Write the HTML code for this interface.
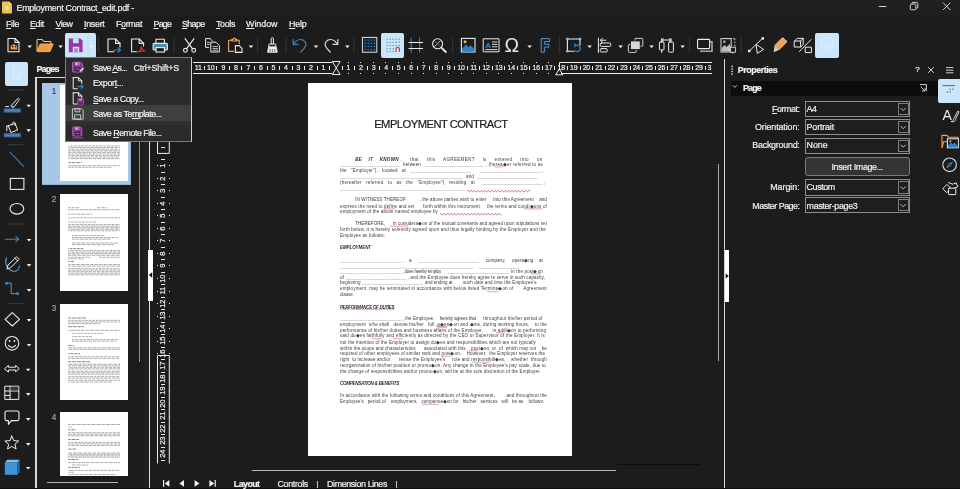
<!DOCTYPE html>
<html lang="en"><head><meta charset="utf-8"><title>Employment Contract_edit.pdf</title>
<style>
html,body{margin:0;padding:0;overflow:hidden;}
body{width:960px;height:489px;overflow:hidden;background:#1c1c1c;position:relative;font-family:"Liberation Sans",sans-serif;}
div{position:absolute;box-sizing:border-box;}
#w{left:0;top:0;width:960px;height:489px;will-change:transform;overflow:hidden;}
.t{position:absolute;white-space:pre;line-height:1;-webkit-text-stroke:0.2px;}
u{text-decoration:underline;text-decoration-thickness:0.7px;text-underline-offset:1px;}
svg{position:absolute;left:0;top:0;overflow:visible;}
.doc{position:absolute;white-space:pre;line-height:1;font-size:4.3px;color:#4a4a4a;text-align:justify;text-align-last:justify;}
.doc b{color:#222;}
</style></head><body><div id="w">
<div style="left:0px;top:0px;width:960px;height:14.5px;background:#202020;"></div>
<span id="t1" class="t" style="left:16.5px;top:3.68px;font-size:8.9px;color:#f0f0f0;letter-spacing:-0.244px;">Employment Contract_edit.pdf -</span>
<span id="t2" class="t" style="left:6px;top:19.58px;font-size:8.9px;color:#f0f0f0;letter-spacing:-0.328px;"><u>F</u>ile</span>
<span id="t3" class="t" style="left:30px;top:19.58px;font-size:8.9px;color:#f0f0f0;letter-spacing:-0.324px;"><u>E</u>dit</span>
<span id="t4" class="t" style="left:55.5px;top:19.58px;font-size:8.9px;color:#f0f0f0;letter-spacing:-0.523px;"><u>V</u>iew</span>
<span id="t5" class="t" style="left:84px;top:19.58px;font-size:8.9px;color:#f0f0f0;letter-spacing:-0.284px;"><u>I</u>nsert</span>
<span id="t6" class="t" style="left:116px;top:19.58px;font-size:8.9px;color:#f0f0f0;letter-spacing:-0.352px;">F<u>o</u>rmat</span>
<span id="t7" class="t" style="left:153.5px;top:19.58px;font-size:8.9px;color:#f0f0f0;letter-spacing:-0.809px;"><u>P</u>age</span>
<span id="t8" class="t" style="left:182px;top:19.58px;font-size:8.9px;color:#f0f0f0;letter-spacing:-0.634px;"><u>S</u>hape</span>
<span id="t9" class="t" style="left:216px;top:19.58px;font-size:8.9px;color:#f0f0f0;letter-spacing:-0.344px;"><u>T</u>ools</span>
<span id="t10" class="t" style="left:246px;top:19.58px;font-size:8.9px;color:#f0f0f0;letter-spacing:-0.016px;"><u>W</u>indow</span>
<span id="t11" class="t" style="left:289px;top:19.58px;font-size:8.9px;color:#f0f0f0;letter-spacing:-0.191px;"><u>H</u>elp</span>
<div style="left:65px;top:33px;width:31px;height:24.5px;background:#cbe6fb;border-radius:2px;"></div>
<div style="left:380.6px;top:33px;width:23.6px;height:24.5px;background:#cbe6fb;border-radius:2px;"></div>
<div style="left:815px;top:33px;width:23.5px;height:24.5px;background:#cbe6fb;border-radius:2px;"></div>
<div style="left:5.4px;top:62px;width:22.4px;height:23.8px;background:#cbe6fb;border-radius:2px;"></div>
<span id="t12" class="t" style="left:36.5px;top:64.58px;font-size:8.9px;color:#f0f0f0;font-weight:700;letter-spacing:-0.831px;">Pages</span>
<div style="left:35px;top:77.5px;width:1.6px;height:412px;background:#d8d8d8;"></div>
<div style="left:35px;top:76.9px;width:105px;height:1.6px;background:#d8d8d8;"></div>
<div style="left:42px;top:83px;width:89px;height:101.8px;background:#a6c8e6;border-right:1px solid #8db2d6;border-bottom:1px solid #8db2d6;"></div>
<div style="left:59.6px;top:85px;width:68.1px;height:95.8px;background:#ffffff;overflow:hidden;"></div>
<div style="left:59.6px;top:194.4px;width:68.1px;height:96.8px;background:#ffffff;overflow:hidden;"></div>
<div style="left:59.6px;top:303.5px;width:68.1px;height:96px;background:#ffffff;overflow:hidden;"></div>
<div style="left:59.6px;top:411.8px;width:68.1px;height:64.4px;background:#ffffff;overflow:hidden;"></div>
<span id="t13" class="t" style="left:51.8px;top:88.25px;font-size:8.2px;color:#3c4854;">1</span>
<span id="t14" class="t" style="left:51.8px;top:196.25px;font-size:8.2px;color:#a0a0a0;">2</span>
<span id="t15" class="t" style="left:51.8px;top:304.85px;font-size:8.2px;color:#a0a0a0;">3</span>
<span id="t16" class="t" style="left:51.8px;top:413.85px;font-size:8.2px;color:#a0a0a0;">4</span>
<div style="left:138.6px;top:60px;width:1px;height:302px;background:#8c8c8c;"></div>
<div style="left:47.3px;top:482.1px;width:71px;height:1.4px;background:#b4b4b4;"></div>
<div style="left:143px;top:77px;width:5.8px;height:410.6px;background:#202020;"></div>
<div style="left:149.2px;top:77px;width:1px;height:411px;background:#e0e0e0;"></div>
<div style="left:148.2px;top:249.8px;width:4.6px;height:51.4px;background:#ffffff;"></div>
<div style="left:308.3px;top:83px;width:264px;height:373.2px;background:#ffffff;"></div>
<div style="left:252px;top:470.2px;width:364px;height:1px;background:#b8b8b8;"></div>
<div style="left:617px;top:463.6px;width:84px;height:1px;background:#0c0c0c;"></div>
<div style="left:718px;top:164.3px;width:1.1px;height:197.2px;background:#a8a8a8;"></div>
<div style="left:724px;top:59px;width:1.1px;height:428.5px;background:#d4d4d4;"></div>
<div style="left:724.8px;top:250px;width:4.6px;height:51.5px;background:#ffffff;"></div>
<div style="left:0px;top:487.6px;width:960px;height:1.4px;background:#0e0e0e;"></div>
<span id="t17" class="t" style="left:233.8px;top:479.78px;font-size:8.9px;color:#f0f0f0;font-weight:700;letter-spacing:-0.566px;">Layout</span>
<span id="t18" class="t" style="left:277.5px;top:479.78px;font-size:8.9px;color:#f0f0f0;letter-spacing:-0.320px;">Controls</span>
<span id="t19" class="t" style="left:316.4px;top:480.81px;font-size:6.4px;color:#f0f0f0;">|</span>
<span id="t20" class="t" style="left:327px;top:479.78px;font-size:8.9px;color:#f0f0f0;letter-spacing:-0.374px;">Dimension Lines</span>
<span id="t21" class="t" style="left:395.4px;top:480.81px;font-size:6.4px;color:#f0f0f0;">|</span>
<span id="t22" class="t" style="left:737.8px;top:66.38px;font-size:8.9px;color:#f0f0f0;font-weight:700;letter-spacing:-0.451px;">Properties</span>
<span id="t23" class="t" style="left:915.2px;top:66.06px;font-size:8px;color:#f0f0f0;">?</span>
<div style="left:730.5px;top:80.6px;width:207px;height:15.7px;background:#0c0c0c;"></div>
<span id="t24" class="t" style="left:743px;top:83.88px;font-size:8.9px;color:#f0f0f0;font-weight:700;letter-spacing:-0.805px;">Page</span>
<div style="left:938px;top:79.3px;width:22px;height:24px;background:#cbe6fb;border-radius:2px 0 0 2px;"></div>
<span id="t25" class="t" style="left:772px;top:104.58px;font-size:8.9px;color:#f0f0f0;letter-spacing:-0.425px;"><u>F</u>ormat:</span>
<div style="left:804.6px;top:100.9px;width:105px;height:16.2px;background:#1e1e1e;border:1px solid #8e8e8e;"></div>
<div style="left:897.6px;top:102.9px;width:11px;height:12.2px;background:transparent;border:1px solid #808080;"></div>
<span id="t26" class="t" style="left:806.6px;top:104.58px;font-size:8.9px;color:#f0f0f0;letter-spacing:-0.480px;">A4</span>
<span id="t27" class="t" style="left:755px;top:122.98px;font-size:8.9px;color:#f0f0f0;letter-spacing:-0.108px;">Orientation:</span>
<div style="left:804.6px;top:119.1px;width:105px;height:16.2px;background:#1e1e1e;border:1px solid #8e8e8e;"></div>
<div style="left:897.6px;top:121.1px;width:11px;height:12.2px;background:transparent;border:1px solid #808080;"></div>
<span id="t28" class="t" style="left:806.6px;top:122.98px;font-size:8.9px;color:#f0f0f0;letter-spacing:-0.151px;">Portrait</span>
<span id="t29" class="t" style="left:752.3px;top:141.48px;font-size:8.9px;color:#f0f0f0;letter-spacing:-0.231px;">Background:</span>
<div style="left:804.6px;top:137.7px;width:105px;height:16.2px;background:#1e1e1e;border:1px solid #8e8e8e;"></div>
<div style="left:897.6px;top:139.7px;width:11px;height:12.2px;background:transparent;border:1px solid #808080;"></div>
<span id="t30" class="t" style="left:806.6px;top:141.48px;font-size:8.9px;color:#f0f0f0;letter-spacing:-0.080px;">None</span>
<span id="t31" class="t" style="left:770.2px;top:183.18px;font-size:8.9px;color:#f0f0f0;letter-spacing:-0.028px;">Margin:</span>
<div style="left:804.6px;top:179.4px;width:105px;height:16.2px;background:#1e1e1e;border:1px solid #8e8e8e;"></div>
<div style="left:897.6px;top:181.4px;width:11px;height:12.2px;background:transparent;border:1px solid #808080;"></div>
<span id="t32" class="t" style="left:806.6px;top:183.18px;font-size:8.9px;color:#f0f0f0;letter-spacing:-0.396px;">Custom</span>
<span id="t33" class="t" style="left:752.3px;top:201.68px;font-size:8.9px;color:#f0f0f0;letter-spacing:-0.458px;">Master Page:</span>
<div style="left:804.6px;top:197.2px;width:105px;height:16.2px;background:#1e1e1e;border:1px solid #8e8e8e;"></div>
<div style="left:897.6px;top:199.2px;width:11px;height:12.2px;background:transparent;border:1px solid #808080;"></div>
<span id="t34" class="t" style="left:806.6px;top:201.68px;font-size:8.9px;color:#f0f0f0;letter-spacing:-0.330px;">master-page3</span>
<div style="left:805.2px;top:157.3px;width:104.6px;height:18.9px;background:#343434;border:1px solid #7c7c7c;border-radius:3px;"></div>
<span id="t35" class="t" style="left:831.5px;top:162.78px;font-size:8.9px;color:#f0f0f0;letter-spacing:-0.349px;">Insert Image...</span>
<span id="t42" class="t" style="left:0px;top:64.29px;font-size:7.0px;color:#ededed;left:auto;width:20px;margin-left:188.18px;text-align:center;letter-spacing:-0.25px;">11</span>
<span id="t43" class="t" style="left:0px;top:64.29px;font-size:7.0px;color:#ededed;left:auto;width:20px;margin-left:200.70px;text-align:center;letter-spacing:-0.25px;">10</span>
<span id="t44" class="t" style="left:0px;top:64.29px;font-size:7.0px;color:#ededed;left:auto;width:20px;margin-left:213.22px;text-align:center;letter-spacing:-0.25px;">9</span>
<span id="t45" class="t" style="left:0px;top:64.29px;font-size:7.0px;color:#ededed;left:auto;width:20px;margin-left:225.74px;text-align:center;letter-spacing:-0.25px;">8</span>
<span id="t46" class="t" style="left:0px;top:64.29px;font-size:7.0px;color:#ededed;left:auto;width:20px;margin-left:238.26px;text-align:center;letter-spacing:-0.25px;">7</span>
<span id="t47" class="t" style="left:0px;top:64.29px;font-size:7.0px;color:#ededed;left:auto;width:20px;margin-left:250.78px;text-align:center;letter-spacing:-0.25px;">6</span>
<span id="t48" class="t" style="left:0px;top:64.29px;font-size:7.0px;color:#ededed;left:auto;width:20px;margin-left:263.30px;text-align:center;letter-spacing:-0.25px;">5</span>
<span id="t49" class="t" style="left:0px;top:64.29px;font-size:7.0px;color:#ededed;left:auto;width:20px;margin-left:275.82px;text-align:center;letter-spacing:-0.25px;">4</span>
<span id="t50" class="t" style="left:0px;top:64.29px;font-size:7.0px;color:#ededed;left:auto;width:20px;margin-left:288.34px;text-align:center;letter-spacing:-0.25px;">3</span>
<span id="t51" class="t" style="left:0px;top:64.29px;font-size:7.0px;color:#ededed;left:auto;width:20px;margin-left:300.86px;text-align:center;letter-spacing:-0.25px;">2</span>
<span id="t52" class="t" style="left:0px;top:64.29px;font-size:7.0px;color:#ededed;left:auto;width:20px;margin-left:313.38px;text-align:center;letter-spacing:-0.25px;">1</span>
<span id="t53" class="t" style="left:0px;top:64.29px;font-size:7.0px;color:#ededed;left:auto;width:20px;margin-left:338.42px;text-align:center;letter-spacing:-0.25px;">1</span>
<span id="t54" class="t" style="left:0px;top:64.29px;font-size:7.0px;color:#ededed;left:auto;width:20px;margin-left:350.94px;text-align:center;letter-spacing:-0.25px;">2</span>
<span id="t55" class="t" style="left:0px;top:64.29px;font-size:7.0px;color:#ededed;left:auto;width:20px;margin-left:363.46px;text-align:center;letter-spacing:-0.25px;">3</span>
<span id="t56" class="t" style="left:0px;top:64.29px;font-size:7.0px;color:#ededed;left:auto;width:20px;margin-left:375.98px;text-align:center;letter-spacing:-0.25px;">4</span>
<span id="t57" class="t" style="left:0px;top:64.29px;font-size:7.0px;color:#ededed;left:auto;width:20px;margin-left:388.50px;text-align:center;letter-spacing:-0.25px;">5</span>
<span id="t58" class="t" style="left:0px;top:64.29px;font-size:7.0px;color:#ededed;left:auto;width:20px;margin-left:401.02px;text-align:center;letter-spacing:-0.25px;">6</span>
<span id="t59" class="t" style="left:0px;top:64.29px;font-size:7.0px;color:#ededed;left:auto;width:20px;margin-left:413.54px;text-align:center;letter-spacing:-0.25px;">7</span>
<span id="t60" class="t" style="left:0px;top:64.29px;font-size:7.0px;color:#ededed;left:auto;width:20px;margin-left:426.06px;text-align:center;letter-spacing:-0.25px;">8</span>
<span id="t61" class="t" style="left:0px;top:64.29px;font-size:7.0px;color:#ededed;left:auto;width:20px;margin-left:438.58px;text-align:center;letter-spacing:-0.25px;">9</span>
<span id="t62" class="t" style="left:0px;top:64.29px;font-size:7.0px;color:#ededed;left:auto;width:20px;margin-left:451.10px;text-align:center;letter-spacing:-0.25px;">10</span>
<span id="t63" class="t" style="left:0px;top:64.29px;font-size:7.0px;color:#ededed;left:auto;width:20px;margin-left:463.62px;text-align:center;letter-spacing:-0.25px;">11</span>
<span id="t64" class="t" style="left:0px;top:64.29px;font-size:7.0px;color:#ededed;left:auto;width:20px;margin-left:476.14px;text-align:center;letter-spacing:-0.25px;">12</span>
<span id="t65" class="t" style="left:0px;top:64.29px;font-size:7.0px;color:#ededed;left:auto;width:20px;margin-left:488.66px;text-align:center;letter-spacing:-0.25px;">13</span>
<span id="t66" class="t" style="left:0px;top:64.29px;font-size:7.0px;color:#ededed;left:auto;width:20px;margin-left:501.18px;text-align:center;letter-spacing:-0.25px;">14</span>
<span id="t67" class="t" style="left:0px;top:64.29px;font-size:7.0px;color:#ededed;left:auto;width:20px;margin-left:513.70px;text-align:center;letter-spacing:-0.25px;">15</span>
<span id="t68" class="t" style="left:0px;top:64.29px;font-size:7.0px;color:#ededed;left:auto;width:20px;margin-left:526.22px;text-align:center;letter-spacing:-0.25px;">16</span>
<span id="t69" class="t" style="left:0px;top:64.29px;font-size:7.0px;color:#ededed;left:auto;width:20px;margin-left:538.74px;text-align:center;letter-spacing:-0.25px;">17</span>
<span id="t70" class="t" style="left:0px;top:64.29px;font-size:7.0px;color:#ededed;left:auto;width:20px;margin-left:551.26px;text-align:center;letter-spacing:-0.25px;">18</span>
<span id="t71" class="t" style="left:0px;top:64.29px;font-size:7.0px;color:#ededed;left:auto;width:20px;margin-left:563.78px;text-align:center;letter-spacing:-0.25px;">19</span>
<span id="t72" class="t" style="left:0px;top:64.29px;font-size:7.0px;color:#ededed;left:auto;width:20px;margin-left:576.30px;text-align:center;letter-spacing:-0.25px;">20</span>
<span id="t73" class="t" style="left:0px;top:64.29px;font-size:7.0px;color:#ededed;left:auto;width:20px;margin-left:588.82px;text-align:center;letter-spacing:-0.25px;">21</span>
<span id="t74" class="t" style="left:0px;top:64.29px;font-size:7.0px;color:#ededed;left:auto;width:20px;margin-left:601.34px;text-align:center;letter-spacing:-0.25px;">22</span>
<span id="t75" class="t" style="left:0px;top:64.29px;font-size:7.0px;color:#ededed;left:auto;width:20px;margin-left:613.86px;text-align:center;letter-spacing:-0.25px;">23</span>
<span id="t76" class="t" style="left:0px;top:64.29px;font-size:7.0px;color:#ededed;left:auto;width:20px;margin-left:626.38px;text-align:center;letter-spacing:-0.25px;">24</span>
<span id="t77" class="t" style="left:0px;top:64.29px;font-size:7.0px;color:#ededed;left:auto;width:20px;margin-left:638.90px;text-align:center;letter-spacing:-0.25px;">25</span>
<span id="t78" class="t" style="left:0px;top:64.29px;font-size:7.0px;color:#ededed;left:auto;width:20px;margin-left:651.42px;text-align:center;letter-spacing:-0.25px;">26</span>
<span id="t79" class="t" style="left:0px;top:64.29px;font-size:7.0px;color:#ededed;left:auto;width:20px;margin-left:663.94px;text-align:center;letter-spacing:-0.25px;">27</span>
<span id="t80" class="t" style="left:0px;top:64.29px;font-size:7.0px;color:#ededed;left:auto;width:20px;margin-left:676.46px;text-align:center;letter-spacing:-0.25px;">28</span>
<span id="t81" class="t" style="left:0px;top:64.29px;font-size:7.0px;color:#ededed;left:auto;width:20px;margin-left:688.98px;text-align:center;letter-spacing:-0.25px;">29</span>
<span id="t82" class="t" style="left:707.6px;top:64.29px;font-size:7.0px;color:#ededed;width:4px;overflow:hidden;">3</span>
<span id="t83" class="t" style="left:0px;top:-4.03px;font-size:7.6px;color:#ededed;left:153.00px;top:162.02px;width:20px;height:7.6px;text-align:center;transform:rotate(-90deg);letter-spacing:-0.25px;">1</span>
<span id="t84" class="t" style="left:0px;top:-4.03px;font-size:7.6px;color:#ededed;left:153.00px;top:174.54px;width:20px;height:7.6px;text-align:center;transform:rotate(-90deg);letter-spacing:-0.25px;">2</span>
<span id="t85" class="t" style="left:0px;top:-4.03px;font-size:7.6px;color:#ededed;left:153.00px;top:187.06px;width:20px;height:7.6px;text-align:center;transform:rotate(-90deg);letter-spacing:-0.25px;">3</span>
<span id="t86" class="t" style="left:0px;top:-4.03px;font-size:7.6px;color:#ededed;left:153.00px;top:199.58px;width:20px;height:7.6px;text-align:center;transform:rotate(-90deg);letter-spacing:-0.25px;">4</span>
<span id="t87" class="t" style="left:0px;top:-4.03px;font-size:7.6px;color:#ededed;left:153.00px;top:212.10px;width:20px;height:7.6px;text-align:center;transform:rotate(-90deg);letter-spacing:-0.25px;">5</span>
<span id="t88" class="t" style="left:0px;top:-4.03px;font-size:7.6px;color:#ededed;left:153.00px;top:224.62px;width:20px;height:7.6px;text-align:center;transform:rotate(-90deg);letter-spacing:-0.25px;">6</span>
<span id="t89" class="t" style="left:0px;top:-4.03px;font-size:7.6px;color:#ededed;left:153.00px;top:237.14px;width:20px;height:7.6px;text-align:center;transform:rotate(-90deg);letter-spacing:-0.25px;">7</span>
<span id="t90" class="t" style="left:0px;top:-4.03px;font-size:7.6px;color:#ededed;left:153.00px;top:249.66px;width:20px;height:7.6px;text-align:center;transform:rotate(-90deg);letter-spacing:-0.25px;">8</span>
<span id="t91" class="t" style="left:0px;top:-4.03px;font-size:7.6px;color:#ededed;left:153.00px;top:262.18px;width:20px;height:7.6px;text-align:center;transform:rotate(-90deg);letter-spacing:-0.25px;">9</span>
<span id="t92" class="t" style="left:0px;top:-4.03px;font-size:7.6px;color:#ededed;left:153.00px;top:274.70px;width:20px;height:7.6px;text-align:center;transform:rotate(-90deg);letter-spacing:-0.25px;">10</span>
<span id="t93" class="t" style="left:0px;top:-4.03px;font-size:7.6px;color:#ededed;left:153.00px;top:287.22px;width:20px;height:7.6px;text-align:center;transform:rotate(-90deg);letter-spacing:-0.25px;">11</span>
<span id="t94" class="t" style="left:0px;top:-4.03px;font-size:7.6px;color:#ededed;left:153.00px;top:299.74px;width:20px;height:7.6px;text-align:center;transform:rotate(-90deg);letter-spacing:-0.25px;">12</span>
<span id="t95" class="t" style="left:0px;top:-4.03px;font-size:7.6px;color:#ededed;left:153.00px;top:312.26px;width:20px;height:7.6px;text-align:center;transform:rotate(-90deg);letter-spacing:-0.25px;">13</span>
<span id="t96" class="t" style="left:0px;top:-4.03px;font-size:7.6px;color:#ededed;left:153.00px;top:324.78px;width:20px;height:7.6px;text-align:center;transform:rotate(-90deg);letter-spacing:-0.25px;">14</span>
<span id="t97" class="t" style="left:0px;top:-4.03px;font-size:7.6px;color:#ededed;left:153.00px;top:337.30px;width:20px;height:7.6px;text-align:center;transform:rotate(-90deg);letter-spacing:-0.25px;">15</span>
<span id="t98" class="t" style="left:0px;top:-4.03px;font-size:7.6px;color:#ededed;left:153.00px;top:349.82px;width:20px;height:7.6px;text-align:center;transform:rotate(-90deg);letter-spacing:-0.25px;">16</span>
<span id="t99" class="t" style="left:0px;top:-4.03px;font-size:7.6px;color:#ededed;left:153.00px;top:362.34px;width:20px;height:7.6px;text-align:center;transform:rotate(-90deg);letter-spacing:-0.25px;">17</span>
<span id="t100" class="t" style="left:0px;top:-4.03px;font-size:7.6px;color:#ededed;left:153.00px;top:374.86px;width:20px;height:7.6px;text-align:center;transform:rotate(-90deg);letter-spacing:-0.25px;">18</span>
<span id="t101" class="t" style="left:0px;top:-4.03px;font-size:7.6px;color:#ededed;left:153.00px;top:387.38px;width:20px;height:7.6px;text-align:center;transform:rotate(-90deg);letter-spacing:-0.25px;">19</span>
<span id="t102" class="t" style="left:0px;top:-4.03px;font-size:7.6px;color:#ededed;left:153.00px;top:399.90px;width:20px;height:7.6px;text-align:center;transform:rotate(-90deg);letter-spacing:-0.25px;">20</span>
<span id="t103" class="t" style="left:0px;top:-4.03px;font-size:7.6px;color:#ededed;left:153.00px;top:412.42px;width:20px;height:7.6px;text-align:center;transform:rotate(-90deg);letter-spacing:-0.25px;">21</span>
<span id="t104" class="t" style="left:0px;top:-4.03px;font-size:7.6px;color:#ededed;left:153.00px;top:424.94px;width:20px;height:7.6px;text-align:center;transform:rotate(-90deg);letter-spacing:-0.25px;">22</span>
<span id="t105" class="t" style="left:0px;top:-4.03px;font-size:7.6px;color:#ededed;left:153.00px;top:437.46px;width:20px;height:7.6px;text-align:center;transform:rotate(-90deg);letter-spacing:-0.25px;">23</span>
<span id="t106" class="t" style="left:0px;top:-4.03px;font-size:7.6px;color:#ededed;left:153.00px;top:449.98px;width:20px;height:7.6px;text-align:center;transform:rotate(-90deg);letter-spacing:-0.25px;">24</span>
<span id="t107" class="t" style="left:374.2px;top:118.61px;font-size:11.2px;color:#1a1a1a;letter-spacing:-0.526px;">EMPLOYMENT CONTRACT</span>
<span id="t108" class="t" style="left:355.2px;top:157.55px;font-size:4.5px;color:#3c3c3c;letter-spacing:0.349px;-webkit-text-stroke:0;"><b style="color:#2a2a2a"><i>BE    IT    KNOWN</i></b> ,     that     this     AGREEMENT     is     entered     into     on</span>
<span id="t109" class="t" style="left:340px;top:163.05px;font-size:4.5px;color:#a4a4a4;letter-spacing:-0.281px;-webkit-text-stroke:0;">___________________________</span>
<span id="t110" class="t" style="left:403px;top:163.05px;font-size:4.5px;color:#3c3c3c;letter-spacing:0.141px;-webkit-text-stroke:0;">between</span>
<span id="t111" class="t" style="left:423px;top:163.05px;font-size:4.5px;color:#a4a4a4;letter-spacing:-0.244px;-webkit-text-stroke:0;">___________________________</span>
<span id="t112" class="t" style="left:485.5px;top:163.05px;font-size:4.5px;color:#3c3c3c;letter-spacing:0.230px;-webkit-text-stroke:0;">, (herea◆er referred to as</span>
<span id="t113" class="t" style="left:340px;top:169.05px;font-size:4.5px;color:#3c3c3c;letter-spacing:0.160px;-webkit-text-stroke:0;">the   "Employer"),   located   at</span>
<span id="t114" class="t" style="left:410px;top:169.05px;font-size:4.5px;color:#a4a4a4;letter-spacing:-0.280px;-webkit-text-stroke:0;">__________________________</span>
<span id="t115" class="t" style="left:469px;top:169.05px;font-size:4.5px;color:#3c3c3c;-webkit-text-stroke:0;">,</span>
<span id="t116" class="t" style="left:479.7px;top:169.05px;font-size:4.5px;color:#a4a4a4;letter-spacing:-0.240px;-webkit-text-stroke:0;">___________________________</span>
<span id="t117" class="t" style="left:541.6px;top:169.05px;font-size:4.5px;color:#3c3c3c;-webkit-text-stroke:0;">,</span>
<span id="t118" class="t" style="left:340px;top:175.05px;font-size:4.5px;color:#a4a4a4;letter-spacing:-0.266px;-webkit-text-stroke:0;">_______________________________________________________</span>
<span id="t119" class="t" style="left:466px;top:175.05px;font-size:4.5px;color:#3c3c3c;letter-spacing:0.161px;-webkit-text-stroke:0;">and</span>
<span id="t120" class="t" style="left:477px;top:175.05px;font-size:4.5px;color:#a4a4a4;letter-spacing:-0.281px;-webkit-text-stroke:0;">___________________________</span>
<span id="t121" class="t" style="left:340px;top:180.55px;font-size:4.5px;color:#3c3c3c;letter-spacing:0.216px;-webkit-text-stroke:0;">(hereafter   referred   to   as   the   "Employee")   residing   at</span>
<span id="t122" class="t" style="left:482px;top:180.55px;font-size:4.5px;color:#a4a4a4;letter-spacing:-0.255px;-webkit-text-stroke:0;">___________________________</span>
<span id="t123" class="t" style="left:544px;top:180.55px;font-size:4.5px;color:#3c3c3c;-webkit-text-stroke:0;">,</span>
<span id="t124" class="t" style="left:340px;top:186.95px;font-size:4.5px;color:#a4a4a4;letter-spacing:-0.244px;-webkit-text-stroke:0;">___________________________</span>
<span id="t125" class="t" style="left:402.3px;top:186.95px;font-size:4.5px;color:#3c3c3c;-webkit-text-stroke:0;">,</span>
<span id="t126" class="t" style="left:404px;top:186.95px;font-size:4.5px;color:#a4a4a4;letter-spacing:-0.244px;-webkit-text-stroke:0;">___________________________</span>
<span id="t127" class="t" style="left:530px;top:186.95px;font-size:4.5px;color:#3c3c3c;-webkit-text-stroke:0;">.</span>
<span id="t128" class="t" style="left:355.2px;top:198.45px;font-size:4.5px;color:#3c3c3c;letter-spacing:0.101px;-webkit-text-stroke:0;">IN WITNESS THEREOF          , the above parties wish to enter     into this Agreement    and</span>
<span id="t129" class="t" style="left:340px;top:204.95px;font-size:4.5px;color:#3c3c3c;letter-spacing:0.163px;-webkit-text-stroke:0;">express the need to define and set      forth within this instrument     the terms and condi◆ons of</span>
<span id="t130" class="t" style="left:340px;top:210.25px;font-size:4.5px;color:#3c3c3c;letter-spacing:0.139px;-webkit-text-stroke:0;">employment of the above named employee by</span>
<span id="t131" class="t" style="left:355.2px;top:222.15px;font-size:4.5px;color:#3c3c3c;letter-spacing:0.076px;-webkit-text-stroke:0;">THEREFORE,      in considera◆on of the mutual covenants and agreed upon stipulations set</span>
<span id="t132" class="t" style="left:340px;top:228.45px;font-size:4.5px;color:#3c3c3c;letter-spacing:0.170px;-webkit-text-stroke:0;">forth below, it is hereby solemnly agreed upon and thus legally binding by the Employer and the</span>
<span id="t133" class="t" style="left:340px;top:234.15px;font-size:4.5px;color:#3c3c3c;letter-spacing:0.136px;-webkit-text-stroke:0;">Employee as follows:</span>
<span id="t134" class="t" style="left:340px;top:246.15px;font-size:4.5px;color:#3c3c3c;letter-spacing:-0.077px;-webkit-text-stroke:0;"><b style="color:#2a2a2a"><i>EMPLOYMENT</i></b></span>
<span id="t135" class="t" style="left:340px;top:258.75px;font-size:4.5px;color:#a4a4a4;letter-spacing:-0.229px;-webkit-text-stroke:0;">___________________________</span>
<span id="t136" class="t" style="left:402.5px;top:258.75px;font-size:4.5px;color:#3c3c3c;-webkit-text-stroke:0;">,</span>
<span id="t137" class="t" style="left:409px;top:258.75px;font-size:4.5px;color:#3c3c3c;letter-spacing:-0.516px;-webkit-text-stroke:0;">a</span>
<span id="t138" class="t" style="left:418.6px;top:258.75px;font-size:4.5px;color:#a4a4a4;letter-spacing:-0.266px;-webkit-text-stroke:0;">___________________________</span>
<span id="t139" class="t" style="left:485.7px;top:258.75px;font-size:4.5px;color:#3c3c3c;letter-spacing:0.077px;-webkit-text-stroke:0;">company,</span>
<span id="t140" class="t" style="left:512px;top:258.75px;font-size:4.5px;color:#3c3c3c;letter-spacing:0.123px;-webkit-text-stroke:0;">opera◆ng</span>
<span id="t141" class="t" style="left:539px;top:258.75px;font-size:4.5px;color:#3c3c3c;letter-spacing:0.117px;-webkit-text-stroke:0;">at</span>
<span id="t142" class="t" style="left:340px;top:264.95px;font-size:4.5px;color:#a4a4a4;letter-spacing:-0.229px;-webkit-text-stroke:0;">___________________________</span>
<span id="t143" class="t" style="left:402.5px;top:264.95px;font-size:4.5px;color:#3c3c3c;-webkit-text-stroke:0;">,</span>
<span id="t144" class="t" style="left:404px;top:264.95px;font-size:4.5px;color:#a4a4a4;letter-spacing:-0.256px;-webkit-text-stroke:0;">______________________________</span>
<span id="t145" class="t" style="left:472.5px;top:264.95px;font-size:4.5px;color:#3c3c3c;-webkit-text-stroke:0;">,</span>
<span id="t146" class="t" style="left:478.5px;top:264.95px;font-size:4.5px;color:#a4a4a4;letter-spacing:-0.238px;-webkit-text-stroke:0;">_________________</span>
<span id="t147" class="t" style="left:518px;top:264.95px;font-size:4.5px;color:#3c3c3c;-webkit-text-stroke:0;">,</span>
<span id="t148" class="t" style="left:340px;top:269.75px;font-size:4.5px;color:#a4a4a4;letter-spacing:-0.229px;-webkit-text-stroke:0;">___________________________</span>
<span id="t149" class="t" style="left:402.5px;top:269.75px;font-size:4.5px;color:#3c3c3c;letter-spacing:-0.227px;-webkit-text-stroke:0;">, does hereby employ</span>
<span id="t150" class="t" style="left:447px;top:269.75px;font-size:4.5px;color:#a4a4a4;letter-spacing:-0.225px;-webkit-text-stroke:0;">___________________________</span>
<span id="t151" class="t" style="left:511px;top:269.75px;font-size:4.5px;color:#3c3c3c;letter-spacing:0.176px;-webkit-text-stroke:0;">in the posi◆on</span>
<span id="t152" class="t" style="left:340px;top:275.75px;font-size:4.5px;color:#3c3c3c;letter-spacing:0.367px;-webkit-text-stroke:0;">of</span>
<span id="t153" class="t" style="left:346px;top:275.75px;font-size:4.5px;color:#a4a4a4;letter-spacing:-0.281px;-webkit-text-stroke:0;">___________________________</span>
<span id="t154" class="t" style="left:407.5px;top:275.75px;font-size:4.5px;color:#3c3c3c;letter-spacing:0.135px;-webkit-text-stroke:0;">, and the Employee does hereby agree to serve in such capacity,</span>
<span id="t155" class="t" style="left:340px;top:281.45px;font-size:4.5px;color:#3c3c3c;letter-spacing:0.108px;-webkit-text-stroke:0;">beginning</span>
<span id="t156" class="t" style="left:362px;top:281.45px;font-size:4.5px;color:#a4a4a4;letter-spacing:-0.244px;-webkit-text-stroke:0;">___________________________</span>
<span id="t157" class="t" style="left:425px;top:281.45px;font-size:4.5px;color:#3c3c3c;letter-spacing:0.017px;-webkit-text-stroke:0;">and ending at</span>
<span id="t158" class="t" style="left:463px;top:281.45px;font-size:4.5px;color:#3c3c3c;letter-spacing:0.109px;-webkit-text-stroke:0;">such date and time the Employee's</span>
<span id="t159" class="t" style="left:340px;top:287.45px;font-size:4.5px;color:#3c3c3c;letter-spacing:0.195px;-webkit-text-stroke:0;">employment  may be terminated in accordance with below listed Termina◆on of       Agreement</span>
<span id="t160" class="t" style="left:340px;top:293.45px;font-size:4.5px;color:#3c3c3c;letter-spacing:-0.038px;-webkit-text-stroke:0;">clause.</span>
<span id="t161" class="t" style="left:340px;top:305.65px;font-size:4.5px;color:#3c3c3c;letter-spacing:-0.301px;-webkit-text-stroke:0;"><b style="color:#2a2a2a"><i>PERFORMANCE OF DUTIES</i></b></span>
<span id="t162" class="t" style="left:340px;top:316.95px;font-size:4.5px;color:#a4a4a4;letter-spacing:-0.221px;-webkit-text-stroke:0;">___________________________</span>
<span id="t163" class="t" style="left:402.6px;top:316.95px;font-size:4.5px;color:#3c3c3c;letter-spacing:0.055px;-webkit-text-stroke:0;">, the Employee,</span>
<span id="t164" class="t" style="left:439.7px;top:316.95px;font-size:4.5px;color:#3c3c3c;letter-spacing:-0.068px;-webkit-text-stroke:0;">hereby agrees that</span>
<span id="t165" class="t" style="left:483.3px;top:316.95px;font-size:4.5px;color:#3c3c3c;letter-spacing:0.155px;-webkit-text-stroke:0;">throughout his/her period of</span>
<span id="t166" class="t" style="left:340px;top:322.95px;font-size:4.5px;color:#3c3c3c;letter-spacing:0.150px;-webkit-text-stroke:0;">employment  s/he shall   devote his/her   full  a◆en◆on and ◆me, during working hours,    to the</span>
<span id="t167" class="t" style="left:340px;top:328.95px;font-size:4.5px;color:#3c3c3c;letter-spacing:0.143px;-webkit-text-stroke:0;">performance of his/her duties and business affairs of the Employer,       in addi◆on to performing</span>
<span id="t168" class="t" style="left:340px;top:334.45px;font-size:4.5px;color:#3c3c3c;letter-spacing:0.180px;-webkit-text-stroke:0;">said du◆es faithfully and efficiently as directed by the CEO or Supervisor of the Employer. It is</span>
<span id="t169" class="t" style="left:340px;top:340.85px;font-size:4.5px;color:#3c3c3c;letter-spacing:0.129px;-webkit-text-stroke:0;">not the intention of the Employer to assign du◆es and responsibilities which are not typically</span>
<span id="t170" class="t" style="left:340px;top:346.55px;font-size:4.5px;color:#3c3c3c;letter-spacing:0.129px;-webkit-text-stroke:0;">within the scope and characteristics      associated with this    posi◆on, or  of  which may not    be</span>
<span id="t171" class="t" style="left:340px;top:352.35px;font-size:4.5px;color:#3c3c3c;letter-spacing:0.131px;-webkit-text-stroke:0;">required of other employees of similar rank and posi◆on.    However,  the Employer reserves the</span>
<span id="t172" class="t" style="left:340px;top:358.25px;font-size:4.5px;color:#3c3c3c;letter-spacing:0.130px;-webkit-text-stroke:0;">right  to increase and/or      revise the Employee's     role and responsibili◆es,    whether  through</span>
<span id="t173" class="t" style="left:340px;top:364.25px;font-size:4.5px;color:#3c3c3c;letter-spacing:0.157px;-webkit-text-stroke:0;">reorganization of his/her position or promo◆on. Any change in the Employee's pay scale, due to</span>
<span id="t174" class="t" style="left:340px;top:370.05px;font-size:4.5px;color:#3c3c3c;letter-spacing:0.154px;-webkit-text-stroke:0;">the change of responsibilities and/or promo◆on, will be at the sole discretion of the Employer.</span>
<span id="t175" class="t" style="left:340px;top:382.25px;font-size:4.5px;color:#3c3c3c;letter-spacing:-0.236px;-webkit-text-stroke:0;"><b style="color:#2a2a2a"><i>COMPENSATION &amp; BENEFITS</i></b></span>
<span id="t176" class="t" style="left:340px;top:394.25px;font-size:4.5px;color:#3c3c3c;letter-spacing:0.154px;-webkit-text-stroke:0;">In accordance with the following terms and conditions of this Agreement,        and throughout the</span>
<span id="t177" class="t" style="left:340px;top:400.25px;font-size:4.5px;color:#3c3c3c;letter-spacing:0.064px;-webkit-text-stroke:0;">Employee's   period of    employment,   compensa◆on for   his/her   services   will   be as    follows:</span>
<svg width="960" height="489" viewBox="0 0 960 489">
<g><path d="M3 1.5 h6 l3 3 v8 a1 1 0 0 1 -1 1 h-8 a1 1 0 0 1 -1 -1 v-10 a1 1 0 0 1 1 -1z" fill="#e8c55a"/><path d="M9 1.5 l3 3 h-3z" fill="#f7e6a8"/><circle cx="7" cy="8" r="2" fill="#f3dc8c"/></g>
<g stroke="#e6e6e6" stroke-width="0.9" fill="none"><path d="M878.8 6.5 h7.4"/><rect x="910.3" y="4" width="5.6" height="5.8" rx="1.2"/><path d="M912 4 v-0.6 a1 1 0 0 1 1 -1 h3.6 a1.2 1.2 0 0 1 1.2 1.2 v3.6 a1 1 0 0 1 -1 1 h-0.8"/><path d="M943 2.6 l7.4 7.4 M950.4 2.6 l-7.4 7.4"/></g>
<path d="M152.2 272.3 v5.4 l-3.4 -2.7z" fill="#111"/>
<path d="M725.6 273.4 v5.2 l3.2 -2.6z" fill="#111"/>
<g fill="#f0f0f0"><rect x="163" y="480" width="1.2" height="6.8"/><path d="M169.4 480 v6.8 l-4.6 -3.4z"/><path d="M184 480 v6.8 l-4.6 -3.4z"/><path d="M194.6 480 v6.8 l4.8 -3.4z"/><path d="M209.4 480 v6.8 l4.8 -3.4z"/><rect x="214.6" y="480" width="1.2" height="6.8"/></g>
<g fill="#e8e8e8"><rect x="731.4" y="65.6" width="1.4" height="1.4"/><rect x="731.4" y="68.2" width="1.4" height="1.4"/><rect x="731.4" y="70.8" width="1.4" height="1.4"/><rect x="731.4" y="73.4" width="1.4" height="1.4"/></g>
<path d="M928.2 67.2 l5.6 5.6 M933.8 67.2 l-5.6 5.6" stroke="#e8e8e8" stroke-width="0.9"/>
<path d="M946 67.6 h7.4 M946 70.2 h7.4 M946 72.8 h7.4" stroke="#e8e8e8" stroke-width="0.9"/>
<path d="M732.6 85.2 l2.2 2.2 l2.2 -2.2" stroke="#d0d0d0" stroke-width="0.9" fill="none"/>
<g stroke="#e4e4e4" stroke-width="0.9" fill="none"><path d="M920 84.6 h6.4 v6.4"/><path d="M920.6 86.6 l4 4 M925 88 v3 h-3"/></g>
<path d="M900.6 107.9 l2.6 2.6 l2.6 -2.6" stroke="#d0d0d0" stroke-width="0.9" fill="none"/>
<path d="M900.6 126.1 l2.6 2.6 l2.6 -2.6" stroke="#d0d0d0" stroke-width="0.9" fill="none"/>
<path d="M900.6 144.7 l2.6 2.6 l2.6 -2.6" stroke="#d0d0d0" stroke-width="0.9" fill="none"/>
<path d="M900.6 186.4 l2.6 2.6 l2.6 -2.6" stroke="#d0d0d0" stroke-width="0.9" fill="none"/>
<path d="M900.6 204.2 l2.6 2.6 l2.6 -2.6" stroke="#d0d0d0" stroke-width="0.9" fill="none"/>
<g stroke="#ededed" stroke-width="1" fill="none"><path d="M193 62.5 H332.5 M193 73.5 H332.5"/><path d="M559.5 62.5 H712 M559.5 73.5 H712 M559.5 62.5 V73.5"/><path d="M332.3 61.5 h7.8 l-7.8 13 h7.8 z" stroke-linejoin="round"/><path d="M555.6 74.8 l3.7 -5.6 l3.7 5.6z" fill="#1c1c1c"/></g>
<g fill="#ededed" shape-rendering="crispEdges"><rect x="198" y="62" width="1" height="1"/><rect x="198" y="73" width="1" height="1"/><rect x="204" y="66" width="1" height="4"/><rect x="210" y="62" width="1" height="1"/><rect x="210" y="73" width="1" height="1"/><rect x="216" y="66" width="1" height="4"/><rect x="223" y="62" width="1" height="1"/><rect x="223" y="73" width="1" height="1"/><rect x="229" y="66" width="1" height="4"/><rect x="235" y="62" width="1" height="1"/><rect x="235" y="73" width="1" height="1"/><rect x="241" y="66" width="1" height="4"/><rect x="248" y="62" width="1" height="1"/><rect x="248" y="73" width="1" height="1"/><rect x="254" y="66" width="1" height="4"/><rect x="260" y="62" width="1" height="1"/><rect x="260" y="73" width="1" height="1"/><rect x="267" y="66" width="1" height="4"/><rect x="273" y="62" width="1" height="1"/><rect x="273" y="73" width="1" height="1"/><rect x="279" y="66" width="1" height="4"/><rect x="285" y="62" width="1" height="1"/><rect x="285" y="73" width="1" height="1"/><rect x="292" y="66" width="1" height="4"/><rect x="298" y="62" width="1" height="1"/><rect x="298" y="73" width="1" height="1"/><rect x="304" y="66" width="1" height="4"/><rect x="310" y="62" width="1" height="1"/><rect x="310" y="73" width="1" height="1"/><rect x="317" y="66" width="1" height="4"/><rect x="323" y="62" width="1" height="1"/><rect x="323" y="73" width="1" height="1"/><rect x="329" y="66" width="1" height="4"/><rect x="342" y="66" width="1" height="4"/><rect x="348" y="62" width="1" height="1"/><rect x="348" y="73" width="1" height="1"/><rect x="354" y="66" width="1" height="4"/><rect x="360" y="62" width="1" height="1"/><rect x="360" y="73" width="1" height="1"/><rect x="367" y="66" width="1" height="4"/><rect x="373" y="62" width="1" height="1"/><rect x="373" y="73" width="1" height="1"/><rect x="379" y="66" width="1" height="4"/><rect x="385" y="62" width="1" height="1"/><rect x="385" y="73" width="1" height="1"/><rect x="392" y="66" width="1" height="4"/><rect x="398" y="62" width="1" height="1"/><rect x="398" y="73" width="1" height="1"/><rect x="404" y="66" width="1" height="4"/><rect x="411" y="62" width="1" height="1"/><rect x="411" y="73" width="1" height="1"/><rect x="417" y="66" width="1" height="4"/><rect x="423" y="62" width="1" height="1"/><rect x="423" y="73" width="1" height="1"/><rect x="429" y="66" width="1" height="4"/><rect x="436" y="62" width="1" height="1"/><rect x="436" y="73" width="1" height="1"/><rect x="442" y="66" width="1" height="4"/><rect x="448" y="62" width="1" height="1"/><rect x="448" y="73" width="1" height="1"/><rect x="454" y="66" width="1" height="4"/><rect x="461" y="62" width="1" height="1"/><rect x="461" y="73" width="1" height="1"/><rect x="467" y="66" width="1" height="4"/><rect x="473" y="62" width="1" height="1"/><rect x="473" y="73" width="1" height="1"/><rect x="479" y="66" width="1" height="4"/><rect x="486" y="62" width="1" height="1"/><rect x="486" y="73" width="1" height="1"/><rect x="492" y="66" width="1" height="4"/><rect x="498" y="62" width="1" height="1"/><rect x="498" y="73" width="1" height="1"/><rect x="504" y="66" width="1" height="4"/><rect x="511" y="62" width="1" height="1"/><rect x="511" y="73" width="1" height="1"/><rect x="517" y="66" width="1" height="4"/><rect x="523" y="62" width="1" height="1"/><rect x="523" y="73" width="1" height="1"/><rect x="529" y="66" width="1" height="4"/><rect x="536" y="62" width="1" height="1"/><rect x="536" y="73" width="1" height="1"/><rect x="542" y="66" width="1" height="4"/><rect x="548" y="62" width="1" height="1"/><rect x="548" y="73" width="1" height="1"/><rect x="554" y="66" width="1" height="4"/><rect x="561" y="62" width="1" height="1"/><rect x="561" y="73" width="1" height="1"/><rect x="567" y="66" width="1" height="4"/><rect x="573" y="62" width="1" height="1"/><rect x="573" y="73" width="1" height="1"/><rect x="580" y="66" width="1" height="4"/><rect x="586" y="62" width="1" height="1"/><rect x="586" y="73" width="1" height="1"/><rect x="592" y="66" width="1" height="4"/><rect x="598" y="62" width="1" height="1"/><rect x="598" y="73" width="1" height="1"/><rect x="605" y="66" width="1" height="4"/><rect x="611" y="62" width="1" height="1"/><rect x="611" y="73" width="1" height="1"/><rect x="617" y="66" width="1" height="4"/><rect x="623" y="62" width="1" height="1"/><rect x="623" y="73" width="1" height="1"/><rect x="630" y="66" width="1" height="4"/><rect x="636" y="62" width="1" height="1"/><rect x="636" y="73" width="1" height="1"/><rect x="642" y="66" width="1" height="4"/><rect x="648" y="62" width="1" height="1"/><rect x="648" y="73" width="1" height="1"/><rect x="655" y="66" width="1" height="4"/><rect x="661" y="62" width="1" height="1"/><rect x="661" y="73" width="1" height="1"/><rect x="667" y="66" width="1" height="4"/><rect x="673" y="62" width="1" height="1"/><rect x="673" y="73" width="1" height="1"/><rect x="680" y="66" width="1" height="4"/><rect x="686" y="62" width="1" height="1"/><rect x="686" y="73" width="1" height="1"/><rect x="692" y="66" width="1" height="4"/><rect x="698" y="62" width="1" height="1"/><rect x="698" y="73" width="1" height="1"/><rect x="705" y="66" width="1" height="4"/><rect x="711" y="62" width="1" height="1"/><rect x="711" y="73" width="1" height="1"/></g>
<g stroke="#ededed" stroke-width="1" fill="none"><path d="M157.5 142 V153.4 H169.3 V142"/><path d="M157.5 463.5 V355.5 H169.3 V463.5"/></g>
<g fill="#ededed" shape-rendering="crispEdges"><rect x="161" y="159" width="4" height="1"/><rect x="157" y="165" width="1" height="1"/><rect x="169" y="165" width="1" height="1"/><rect x="161" y="172" width="4" height="1"/><rect x="157" y="178" width="1" height="1"/><rect x="169" y="178" width="1" height="1"/><rect x="161" y="184" width="4" height="1"/><rect x="157" y="190" width="1" height="1"/><rect x="169" y="190" width="1" height="1"/><rect x="161" y="197" width="4" height="1"/><rect x="157" y="203" width="1" height="1"/><rect x="169" y="203" width="1" height="1"/><rect x="161" y="209" width="4" height="1"/><rect x="157" y="215" width="1" height="1"/><rect x="169" y="215" width="1" height="1"/><rect x="161" y="222" width="4" height="1"/><rect x="157" y="228" width="1" height="1"/><rect x="169" y="228" width="1" height="1"/><rect x="161" y="234" width="4" height="1"/><rect x="157" y="240" width="1" height="1"/><rect x="169" y="240" width="1" height="1"/><rect x="161" y="247" width="4" height="1"/><rect x="157" y="253" width="1" height="1"/><rect x="169" y="253" width="1" height="1"/><rect x="161" y="259" width="4" height="1"/><rect x="157" y="265" width="1" height="1"/><rect x="169" y="265" width="1" height="1"/><rect x="161" y="272" width="4" height="1"/><rect x="157" y="278" width="1" height="1"/><rect x="169" y="278" width="1" height="1"/><rect x="161" y="284" width="4" height="1"/><rect x="157" y="291" width="1" height="1"/><rect x="169" y="291" width="1" height="1"/><rect x="161" y="297" width="4" height="1"/><rect x="157" y="303" width="1" height="1"/><rect x="169" y="303" width="1" height="1"/><rect x="161" y="309" width="4" height="1"/><rect x="157" y="316" width="1" height="1"/><rect x="169" y="316" width="1" height="1"/><rect x="161" y="322" width="4" height="1"/><rect x="157" y="328" width="1" height="1"/><rect x="169" y="328" width="1" height="1"/><rect x="161" y="334" width="4" height="1"/><rect x="157" y="341" width="1" height="1"/><rect x="169" y="341" width="1" height="1"/><rect x="161" y="347" width="4" height="1"/><rect x="157" y="353" width="1" height="1"/><rect x="169" y="353" width="1" height="1"/><rect x="161" y="359" width="4" height="1"/><rect x="157" y="366" width="1" height="1"/><rect x="169" y="366" width="1" height="1"/><rect x="161" y="372" width="4" height="1"/><rect x="157" y="378" width="1" height="1"/><rect x="169" y="378" width="1" height="1"/><rect x="161" y="384" width="4" height="1"/><rect x="157" y="391" width="1" height="1"/><rect x="169" y="391" width="1" height="1"/><rect x="161" y="397" width="4" height="1"/><rect x="157" y="403" width="1" height="1"/><rect x="169" y="403" width="1" height="1"/><rect x="161" y="409" width="4" height="1"/><rect x="157" y="416" width="1" height="1"/><rect x="169" y="416" width="1" height="1"/><rect x="161" y="422" width="4" height="1"/><rect x="157" y="428" width="1" height="1"/><rect x="169" y="428" width="1" height="1"/><rect x="161" y="434" width="4" height="1"/><rect x="157" y="441" width="1" height="1"/><rect x="169" y="441" width="1" height="1"/><rect x="161" y="447" width="4" height="1"/><rect x="157" y="453" width="1" height="1"/><rect x="169" y="453" width="1" height="1"/><rect x="161" y="460" width="4" height="1"/><rect x="161" y="147" width="4" height="1"/></g>
<g stroke="#ececec" stroke-width="1.1" fill="none" stroke-linejoin="round" stroke-linecap="round" ><path d="M8 38.5 h7 l4 4 v9.3 h-11z"/><path d="M15 38.5 v4 h4" /></g>
<path d="M10.6 49.6 v-3.2 c0-1 1-1.6 1.8-1 c0.4-1.4 2.6-1.4 3 0 c1-0.4 1.8 0.2 1.8 1 v3.2z" fill="#f09a4a"/><circle cx="12.6" cy="46.6" r="0.9" fill="#3a2a1a"/><circle cx="15.6" cy="46.6" r="0.9" fill="#3a2a1a"/>
<path d="M27.40 45.50 h4.6 l-2.3 2.6z" fill="#f2f2f2"/>
<path d="M37 51 V40.4 a0.9 0.9 0 0 1 0.9-0.9 h4.2 l1.6 2 h6.3 a0.9 0.9 0 0 1 0.9 0.9 v2" fill="none" stroke="#f6c27e" stroke-width="1.1" stroke-linejoin="round"/><path d="M37 51.6 l3.2-7.6 h13 l-3.2 7.6z" fill="#f09a3e" stroke="#f6b871" stroke-width="0.9" stroke-linejoin="round"/>
<path d="M58.30 45.50 h4.6 l-2.3 2.6z" fill="#f2f2f2"/>
<path d="M68.8 38.4 h11.4 l2.4 2.4 v11.4 h-13.8z" fill="#96389c"/><rect x="73" y="38.4" width="5.6" height="4.8" fill="#cbe6fb"/><rect x="72.8" y="46.8" width="6.4" height="5.4" fill="#cbe6fb"/><rect x="74.2" y="48.2" width="3.6" height="4" fill="#b77fbf"/>
<rect x="87.6" y="35" width="0.8" height="20.5" fill="#b8d6ee"/>
<path d="M89.30 45.50 h4.6 l-2.3 2.6z" fill="#eef7ff"/>
<rect x="98.10" y="37" width="1" height="16" fill="#363636"/>
<g stroke="#ececec" stroke-width="1.1" fill="none" stroke-linejoin="round" stroke-linecap="round" ><path d="M108 39 h7.6 l4.4 4.4 v3.6 M108 39 v12.8 h6"/><path d="M115.6 39 v4.4 h4.4"/></g>
<g stroke="#2f86c4" stroke-width="1.2" fill="none" stroke-linejoin="round" stroke-linecap="round" ><path d="M113.6 50 h6.6 M118 47.8 l2.4 2.2 l-2.4 2.2"/></g>
<g stroke="#ececec" stroke-width="1.1" fill="none" stroke-linejoin="round" stroke-linecap="round" ><path d="M131.6 39 h7.6 l4.4 4.4 v2.6 M131.6 39 v12.8 h5"/><path d="M139.2 39 v4.4 h4.4"/></g>
<g stroke="#d23b3b" stroke-width="1.1" fill="none" stroke-linejoin="round" stroke-linecap="round" ><path d="M138 52 c2-1 3.4-3.6 3.2-5.4 c1 2.6 2.6 4.4 4 4.6 c-2-0.4-5 0-7.2 0.8z"/></g>
<g stroke="#ececec" stroke-width="1.1" fill="none" stroke-linejoin="round" stroke-linecap="round" ><rect x="156" y="39.3" width="8.4" height="4.2"/></g>
<rect x="153.1" y="43.4" width="14.3" height="6.6" rx="1" fill="#4f8fae" stroke="#ececec" stroke-width="1.1"/><rect x="156" y="47.6" width="8.4" height="4.4" fill="#1c1c1c" stroke="#ececec" stroke-width="1.1"/>
<rect x="173.50" y="37" width="1" height="16" fill="#363636"/>
<g stroke="#ececec" stroke-width="1.1" fill="none" stroke-linejoin="round" stroke-linecap="round" ><path d="M185 38.6 l7.4 10 M194 38.6 l-7.4 10"/><circle cx="185.4" cy="50.3" r="1.9"/><circle cx="193.7" cy="50.3" r="1.9"/></g>
<g stroke="#ececec" stroke-width="1.0" fill="none" stroke-linejoin="round" stroke-linecap="round" ><path d="M210 38.6 h-4.4 v8.8 h3 M210 38.6 l2.6 2.6"/><path d="M211.2 42.2 h4.8 l3.4 3.4 v6.4 h-8.2z"/><path d="M213 46.6 h4.6 M213 48.6 h4.6 M213 50.3 h4.6 M207.3 42.4 h2.2 M207.3 44.4 h2.2" stroke-width="0.8"/></g>
<g stroke="#f2a55c" stroke-width="1.1" fill="none" stroke-linejoin="round" stroke-linecap="round" ><path d="M232 40.2 h-3.4 v11.2 h5 M236.2 40.2 h3 v3.6"/><path d="M231.8 41 v-1.6 h1.4 c0-1.8 2.2-1.8 2.2 0 h1.4 v1.6z"/></g>
<g stroke="#ececec" stroke-width="1.1" fill="none" stroke-linejoin="round" stroke-linecap="round" ><path d="M235.4 45.6 h3.8 l2.8 2.8 v4 h-6.6z" fill="#1c1c1c"/></g>
<path d="M248.70 45.50 h4.6 l-2.3 2.6z" fill="#f2f2f2"/>
<rect x="257.10" y="37" width="1" height="16" fill="#363636"/>
<g stroke="#ececec" stroke-width="1.0" fill="none" stroke-linejoin="round" stroke-linecap="round" ><path d="M271.2 44 v-5.2 a1.1 1.1 0 0 1 2.2 0 v5.2"/><path d="M268.8 47 v-2.2 a0.8 0.8 0 0 1 0.8-0.8 h5.4 a0.8 0.8 0 0 1 0.8 0.8 v2.2z"/><path d="M268.6 47.2 l-1 5 h9.6 l-1-5z" fill="#ececec"/></g>
<path d="M270 49 v3 M272.4 49 v3 M274.8 49 v3" stroke="#1c1c1c" stroke-width="0.6"/>
<rect x="285.50" y="37" width="1" height="16" fill="#363636"/>
<g stroke="#3d85bd" stroke-width="1.25" fill="none" stroke-linejoin="round" stroke-linecap="round" ><path d="M293.2 39.6 v4.8 h4.8"/><path d="M293.6 44 c2.6-3.8 6.6-5.6 10-3.6 c3.4 2.2 2.6 5.6 0.6 8 l-3.4 3.6"/></g>
<path d="M313.70 45.50 h4.6 l-2.3 2.6z" fill="#f2f2f2"/>
<g stroke="#d8d8d8" stroke-width="1.25" fill="none" stroke-linejoin="round" stroke-linecap="round" ><path d="M337.8 39.6 v4.8 h-4.8"/><path d="M337.4 44 c-2.6-3.8-6.6-5.6-10-3.6 c-3.4 2.2-2.6 5.6-0.6 8 l3.4 3.6"/></g>
<path d="M345.10 45.50 h4.6 l-2.3 2.6z" fill="#f2f2f2"/>
<rect x="353.30" y="37" width="1" height="16" fill="#363636"/>
<rect x="362.4" y="37.4" width="14.4" height="14.8" fill="#10263a" stroke="#e0e0e0" stroke-width="1"/>
<g fill="#6fa8d6"><rect x="364.6" y="39.6" width="1" height="1"/><rect x="364.6" y="42.8" width="1" height="1"/><rect x="364.6" y="46" width="1" height="1"/><rect x="364.6" y="49.2" width="1" height="1"/><rect x="367.7" y="39.6" width="1" height="1"/><rect x="367.7" y="42.8" width="1" height="1"/><rect x="367.7" y="46" width="1" height="1"/><rect x="367.7" y="49.2" width="1" height="1"/><rect x="370.8" y="39.6" width="1" height="1"/><rect x="370.8" y="42.8" width="1" height="1"/><rect x="370.8" y="46" width="1" height="1"/><rect x="370.8" y="49.2" width="1" height="1"/><rect x="373.9" y="39.6" width="1" height="1"/><rect x="373.9" y="42.8" width="1" height="1"/><rect x="373.9" y="46" width="1" height="1"/><rect x="373.9" y="49.2" width="1" height="1"/></g>
<g fill="#3b7f8a"><rect x="386.6" y="38.6" width="1.1" height="1.1"/><rect x="386.6" y="41.8" width="1.1" height="1.1"/><rect x="386.6" y="45" width="1.1" height="1.1"/><rect x="386.6" y="48.2" width="1.1" height="1.1"/><rect x="386.6" y="51" width="1.1" height="1.1"/><rect x="389.6" y="38.6" width="1.1" height="1.1"/><rect x="389.6" y="41.8" width="1.1" height="1.1"/><rect x="389.6" y="45" width="1.1" height="1.1"/><rect x="389.6" y="48.2" width="1.1" height="1.1"/><rect x="389.6" y="51" width="1.1" height="1.1"/><rect x="392.6" y="38.6" width="1.1" height="1.1"/><rect x="392.6" y="41.8" width="1.1" height="1.1"/><rect x="392.6" y="45" width="1.1" height="1.1"/><rect x="392.6" y="48.2" width="1.1" height="1.1"/><rect x="392.6" y="51" width="1.1" height="1.1"/><rect x="395.6" y="38.6" width="1.1" height="1.1"/><rect x="395.6" y="41.8" width="1.1" height="1.1"/><rect x="395.6" y="45" width="1.1" height="1.1"/><rect x="398.6" y="38.6" width="1.1" height="1.1"/><rect x="398.6" y="41.8" width="1.1" height="1.1"/><rect x="398.6" y="45" width="1.1" height="1.1"/></g>
<path d="M396 52 v-3 a1.7 1.7 0 0 1 3.4 0 v3" fill="none" stroke="#d23b3b" stroke-width="1.2"/>
<path d="M411.2 37.8 V52.6 M419.6 37.8 V52.6" stroke="#3d85bd" stroke-width="1.1"/><path d="M408.6 42.5 H423 M408.6 48.5 H423" stroke="#ececec" stroke-width="1.1"/>
<g stroke="#ececec" stroke-width="1.1" fill="none" stroke-linejoin="round" stroke-linecap="round" ><circle cx="437.6" cy="43.8" r="5"/><path d="M441.4 47.6 l4.4 4.4" stroke-width="1.8"/><path d="M434.6 46.6 l5.6-5.6" stroke-width="0.8"/></g>
<path d="M435 42.4 h2 M438.4 45.2 h2" stroke="#3d85bd" stroke-width="0.9"/>
<rect x="452.10" y="37" width="1" height="16" fill="#363636"/>
<rect x="461.4" y="38.4" width="13.6" height="13.6" fill="#1c1c1c" stroke="#ececec" stroke-width="1.1"/><path d="M462 51.4 v-2.6 l4-4.2 l2.6 2.6 l2-2 l3.8 3.8 v2.4z" fill="#2f80c4"/><circle cx="465" cy="41.8" r="1.5" fill="#e9b95a"/>
<g stroke="#ececec" stroke-width="1.0" fill="none" stroke-linejoin="round" stroke-linecap="round" ><rect x="483.6" y="38.8" width="15.4" height="13"/><path d="M485.6 49.6 h11.4 M492.4 42 h4.6 M492.4 44.4 h4.6 M492.4 46.8 h4.6" stroke-width="0.9"/></g>
<text x="485.2" y="47.6" font-family="Liberation Sans, sans-serif" font-size="8" font-weight="700" fill="#3d85bd">A</text>
<text x="504.6" y="52.2" font-family="Liberation Sans, sans-serif" font-size="19.5" fill="#e6e6e6">Ω</text>
<path d="M527.30 45.50 h4.6 l-2.3 2.6z" fill="#f2f2f2"/>
<path d="M541.2 38.6 h8.4 v3 h-5.2 v2.6 h4.4 v3 h-4.4 v5 h-3.2z" fill="#14202c" stroke="#5a94c8" stroke-width="1" stroke-linejoin="round"/>
<rect x="558.90" y="37" width="1" height="16" fill="#363636"/>
<g stroke="#ececec" stroke-width="1.1" fill="none" stroke-linejoin="round" stroke-linecap="round" ><path d="M574 51.2 h-6.6 v-12.2 h12.6 v6"/></g>
<g fill="#8cc4ea"><rect x="566.2" y="37.8" width="2.4" height="2.4"/><rect x="578.8" y="37.8" width="2.4" height="2.4"/><rect x="566.2" y="50" width="2.4" height="2.4"/></g>
<g stroke="#3d85bd" stroke-width="1.2" fill="none" stroke-linejoin="round" stroke-linecap="round" ><path d="M575.8 45.4 a3.2 3.2 0 1 1 -0.8 5.4"/><path d="M574.4 44 l1.6 1.6 l-1.8 1.2"/></g>
<path d="M587.30 45.50 h4.6 l-2.3 2.6z" fill="#f2f2f2"/>
<g stroke="#ececec" stroke-width="1.0" fill="none" stroke-linejoin="round" stroke-linecap="round" ><path d="M598.4 38 V52.6"/><path d="M600.4 40.2 h5.6 M602.4 38.4 l-2 1.8 l2 1.8"/><rect x="600.2" y="43" width="10.6" height="3.4" rx="1.2"/><rect x="600.2" y="48.6" width="7" height="3.4" rx="1.2"/></g>
<path d="M618.30 45.50 h4.6 l-2.3 2.6z" fill="#f2f2f2"/>
<g stroke="#d0d0d0" stroke-width="1.0" fill="none" stroke-linejoin="round" stroke-linecap="round" ><rect x="635" y="38.4" width="7.8" height="7.8" rx="0.8"/><rect x="628.4" y="44.6" width="7.8" height="7.8" rx="0.8"/></g>
<rect x="630.6" y="41" width="9.6" height="8.4" fill="#d6d6d6" stroke="#1c1c1c" stroke-width="0.8"/>
<path d="M649.30 45.50 h4.6 l-2.3 2.6z" fill="#f2f2f2"/>
<g stroke="#ececec" stroke-width="1.0" fill="none" stroke-linejoin="round" stroke-linecap="round" ><rect x="659.4" y="42" width="4.6" height="8" rx="1"/><rect x="668.6" y="42" width="4.8" height="10.2" rx="1"/><path d="M661.7 38.6 v3.4 M661.7 50 v2.6 M671 38.6 v3.4 M661.7 40 h9.3 M663.4 38.8 l-1.7 1.2 l1.7 1.2 M669.3 38.8 l1.7 1.2 l-1.7 1.2"/></g>
<path d="M680.30 45.50 h4.6 l-2.3 2.6z" fill="#f2f2f2"/>
<rect x="688.90" y="37" width="1" height="16" fill="#363636"/>
<path d="M700 51.2 h12 v-9.4 h-2" fill="none" stroke="#a8a8a8" stroke-width="1.6"/><rect x="697.6" y="39.4" width="12" height="9.2" rx="0.8" fill="none" stroke="#ececec" stroke-width="1.1"/>
<rect x="721" y="38.6" width="10.2" height="13.4" fill="none" stroke="#dcdcdc" stroke-width="1"/><path d="M721.6 51.4 v-3.4 l3-3 l2 2 l3.6-3.6 v8z" fill="#bdbdbd"/><circle cx="724.4" cy="41.8" r="1.2" fill="#bdbdbd"/><path d="M727 38.6 h8 M734.8 38.6 v8" stroke="#dcdcdc" stroke-width="0.9" stroke-dasharray="1.6 1.4" fill="none"/><rect x="730.4" y="47.2" width="5" height="5" fill="#1c1c1c" stroke="#dcdcdc" stroke-width="0.9"/><path d="M727.6 49.8 h2.8 M732.8 52.2 v1.6" stroke="#dcdcdc" stroke-width="0.9"/>
<rect x="740.70" y="37" width="1" height="16" fill="#363636"/>
<g stroke="#ececec" stroke-width="1.0" fill="none" stroke-linejoin="round" stroke-linecap="round" ><path d="M749.6 50.8 l13-12.6"/><path d="M756.4 44.6 l7.2 4.8 l-6 3.8z"/></g>
<rect x="748" y="49.8" width="2.4" height="2.4" fill="#f0f0f0"/><rect x="761.6" y="37.2" width="2.4" height="2.4" fill="#f0f0f0"/>
<path d="M781.6 38.2 l4.8 4.4 l-7.4 7.4 l-4.4-4.6z" fill="#f0a254" stroke="#f4b878" stroke-width="0.6"/><path d="M774.6 45.4 l4.4 4.6 l-5.4 2.2z" fill="#cfcfcf"/><path d="M781.6 38.2 l1.2-1 l4.6 4.4 l-1 1z" fill="#f6c690"/>
<g stroke="#ececec" stroke-width="1.0" fill="none" stroke-linejoin="round" stroke-linecap="round" ><path d="M794.6 41 l2.6-2.6 h6 v6 l-2.6 2.6 h-6z M794.6 41 h6 v6 M800.6 41 l2.6-2.6"/><path d="M811 39.6 l-11.6 12"/><rect x="805.6" y="47.2" width="5.8" height="5.4"/></g>
<g stroke="#def0ff" stroke-width="0.9" fill="none" stroke-linejoin="round" stroke-linecap="round" ><path d="M821 40 c4-2.4 8-2.4 12 0 c0 6-2 10-6 12 c-4-2-6-6-6-12z"/><circle cx="827" cy="45.6" r="2.6"/></g>
<g stroke="#e2f2ff" stroke-width="0.9" fill="none" stroke-linejoin="round" stroke-linecap="round" ><path d="M13.4 67.4 v11 l2.6-2.4 l1.8 4 l1.6-0.8 l-1.8-3.8 h3.4z"/></g>
<rect x="8" y="89.50" width="16" height="1" fill="#3e3e3e"/>
<g stroke="#ececec" stroke-width="1.0" fill="none" stroke-linejoin="round" stroke-linecap="round" ><path d="M5.6 106.6 h3 M11 105.8 l6.4-7 c1-1 2.4 0.2 1.6 1.4 l-5.4 7.2z" /></g>
<path d="M10.2 106.8 l1.4-1.8 l2.4 1.6 l-1 1.2z" fill="#6f9fd0"/>
<rect x="3.8" y="108.5" width="17" height="4.1" fill="#3d6ca8"/><rect x="5" y="109.6" width="14.6" height="1.6" fill="#5584bb"/>
<path d="M26.40 104.70 h4.6 l-2.3 2.6z" fill="#f2f2f2"/>
<g stroke="#ececec" stroke-width="1.0" fill="none" stroke-linejoin="round" stroke-linecap="round" ><path d="M8.6 125.6 l6.6-2 l2.4 6.4 l-6.4 2.4z"/><path d="M12.2 124.4 c-0.4-2.6 2.8-3.2 3-0.8 v2"/><path d="M6.8 126.2 v4.6 M6.8 126.2 l1.8-0.6"/></g>
<rect x="3.8" y="133.2" width="17" height="4.1" fill="#3d6ca8"/><rect x="5" y="134.3" width="14.6" height="1.6" fill="#5584bb"/>
<path d="M26.40 129.30 h4.6 l-2.3 2.6z" fill="#f2f2f2"/>
<rect x="8" y="144.20" width="16" height="1" fill="#3e3e3e"/>
<path d="M9.8 151.8 L23.8 166.6" stroke="#3d7fb6" stroke-width="1.1"/>
<rect x="10.3" y="178.4" width="13.6" height="11" fill="none" stroke="#ececec" stroke-width="1.1"/>
<ellipse cx="16.9" cy="208.8" rx="6.9" ry="5.3" fill="none" stroke="#ececec" stroke-width="1.1"/>
<rect x="8" y="223.50" width="16" height="1" fill="#3e3e3e"/>
<g stroke="#3d85bd" stroke-width="1.1" fill="none" stroke-linejoin="round" stroke-linecap="round" ><path d="M5.2 239.2 h12.8 M15.8 236.8 l3 2.4 l-3 2.4"/></g>
<path d="M26.70 238.90 h4.6 l-2.3 2.6z" fill="#f2f2f2"/>
<g stroke="#5a9ccc" stroke-width="1.1" fill="none" stroke-linejoin="round" stroke-linecap="round" ><path d="M6.4 257.6 c-2 6 0.6 12 6.6 13.6 c3.6 0.6 6.4-1.6 6.4-5.4"/></g>
<g stroke="#ececec" stroke-width="1.0" fill="none" stroke-linejoin="round" stroke-linecap="round" ><path d="M7 268.6 l1-3.6 l8.6-8.2 l2.6 2.6 l-8.6 8.2z M15 258.2 l2.6 2.6"/></g>
<path d="M26.70 264.10 h4.6 l-2.3 2.6z" fill="#f2f2f2"/>
<g stroke="#3d85bd" stroke-width="1.2" fill="none" stroke-linejoin="round" stroke-linecap="round" ><path d="M6.6 283.2 h4.6 v10.4 h6.2"/></g>
<circle cx="6.6" cy="283.2" r="1.5" fill="#3d85bd"/><circle cx="17.6" cy="293.6" r="1.5" fill="#3d85bd"/>
<path d="M26.70 289.10 h4.6 l-2.3 2.6z" fill="#f2f2f2"/>
<rect x="8" y="302.90" width="16" height="1" fill="#3e3e3e"/>
<g stroke="#ececec" stroke-width="1.1" fill="none" stroke-linejoin="round" stroke-linecap="round" ><path d="M12.3 312.6 l7.2 6.7 l-7.2 6.7 l-7.2-6.7z"/></g>
<path d="M26.70 319.10 h4.6 l-2.3 2.6z" fill="#f2f2f2"/>
<g stroke="#ececec" stroke-width="1.1" fill="none" stroke-linejoin="round" stroke-linecap="round" ><circle cx="12" cy="343.3" r="6.8"/><path d="M8.4 345.4 c2 2.6 5.2 2.6 7.2 0"/></g>
<circle cx="9.6" cy="341" r="0.9" fill="#ececec"/><circle cx="14.4" cy="341" r="0.9" fill="#ececec"/>
<path d="M26.70 343.90 h4.6 l-2.3 2.6z" fill="#f2f2f2"/>
<g stroke="#ececec" stroke-width="1.0" fill="none" stroke-linejoin="round" stroke-linecap="round" ><path d="M4.8 368.6 l3.6-3.2 v1.8 h7.2 v-1.8 l3.6 3.2 l-3.6 3.2 v-1.8 h-7.2 v1.8z"/></g>
<path d="M25.90 368.70 h4.6 l-2.3 2.6z" fill="#f2f2f2"/>
<g stroke="#ececec" stroke-width="1.0" fill="none" stroke-linejoin="round" stroke-linecap="round" ><rect x="5.2" y="386.2" width="13.6" height="13.2"/><path d="M5.2 391 h13.6 M10 386.2 v13.2 M10 395.4 h-4.8" /></g>
<rect x="10.6" y="386.8" width="7.6" height="3.6" fill="#3a3a3a"/>
<path d="M25.90 393.10 h4.6 l-2.3 2.6z" fill="#f2f2f2"/>
<g stroke="#ececec" stroke-width="1.1" fill="none" stroke-linejoin="round" stroke-linecap="round" ><path d="M6.6 411 h10.8 a1.6 1.6 0 0 1 1.6 1.6 v6.4 a1.6 1.6 0 0 1 -1.6 1.6 h-6 l-3 3.8 v-3.8 h-1.8 a1.6 1.6 0 0 1 -1.6-1.6 v-6.4 a1.6 1.6 0 0 1 1.6-1.6z"/></g>
<path d="M25.90 418.10 h4.6 l-2.3 2.6z" fill="#f2f2f2"/>
<g stroke="#ececec" stroke-width="1.0" fill="none" stroke-linejoin="round" stroke-linecap="round" ><path d="M11.8 436 l1.9 4.6 l5 0.4 l-3.8 3.2 l1.2 4.8 l-4.3-2.6 l-4.3 2.6 l1.2-4.8 l-3.8-3.2 l5-0.4z"/></g>
<path d="M25.90 443.10 h4.6 l-2.3 2.6z" fill="#f2f2f2"/>
<path d="M4.8 462.4 l2.4-2.6 h12.6 l-2.4 2.6z" fill="#7cc0f0"/><path d="M17.4 462.4 l2.4-2.6 v12.4 l-2.4 2.6z" fill="#1f6aa8"/><rect x="4.8" y="462.4" width="12.6" height="12.4" fill="#3f93d6"/>
<path d="M25.90 466.90 h4.6 l-2.3 2.6z" fill="#f2f2f2"/>
<path d="M942.6 85.6 h12.4" stroke="#3a5a78" stroke-width="0.9"/><g fill="#2f8a8a"><rect x="949.6" y="88.6" width="1.3" height="1.3"/><rect x="952.4" y="88.6" width="1.3" height="1.3"/><rect x="946.8" y="91.4" width="1.3" height="1.3"/><rect x="949.6" y="91.4" width="1.3" height="1.3"/></g>
<text x="942.4" y="119.6" font-family="Liberation Sans, sans-serif" font-size="14" fill="#ececec">A</text>
<g stroke="#ececec" stroke-width="0.9" fill="#1c1c1c" stroke-linejoin="round" stroke-linecap="round" ><path d="M951.4 121.6 c1.4-0.4 2.4-1.8 2.6-3.4 l3.8-7 l1.2 0.6 l-3.4 7.2 c0.6 1.6-1.4 3.4-4.2 2.6z"/></g>
<path d="M954.4 117.6 l1.6 0.8" stroke="#3d85bd" stroke-width="1.4"/>
<path d="M942 147.6 V135.4 h5 l1.4 1.8 h9.6 v2" fill="none" stroke="#f2a55c" stroke-width="1.1" stroke-linejoin="round"/><path d="M942 147.8 l1.6-6 h4" fill="none" stroke="#f2a55c" stroke-width="1.1"/><rect x="947.4" y="138.8" width="11" height="9" fill="#1c1c1c" stroke="#ececec" stroke-width="1"/><path d="M948 147.2 v-2 l2.8-3 l2 2 l1.6-1.6 l3.4 3.2 v1.4z" fill="#2f80c4"/><circle cx="950.4" cy="141.2" r="1" fill="#e9b95a"/>
<g stroke="#dcdcdc" stroke-width="1.1" fill="none" stroke-linejoin="round" stroke-linecap="round" ><circle cx="949.6" cy="164.8" r="6.8"/></g>
<path d="M953 161.4 l-2.2 4.6 l-4.6 2.2 l2.2-4.6z" fill="#3d85bd"/><circle cx="949.6" cy="164.8" r="0.9" fill="#1c1c1c"/>
<g stroke="#ececec" stroke-width="1.0" fill="none" stroke-linejoin="round" stroke-linecap="round" ><path d="M948.6 182.6 l4 1.6 l3.6-1.4 l1.6 4 l-3.4 1.4"/><path d="M943 188.4 l4-4 l4 4 l-4 4z"/><rect x="948.6" y="188.2" width="7.2" height="6.4" rx="0.6" fill="#1c1c1c"/></g>
<path d="M467.0 191.2 q0.85 -2.00 1.70 0 q0.85 2.00 1.70 0 q0.85 -2.00 1.70 0 q0.85 2.00 1.70 0 q0.85 -2.00 1.70 0 q0.85 2.00 1.70 0 q0.85 -2.00 1.70 0 q0.85 2.00 1.70 0 q0.85 -2.00 1.70 0 q0.85 2.00 1.70 0 q0.85 -2.00 1.70 0 q0.85 2.00 1.70 0 q0.85 -2.00 1.70 0 q0.85 2.00 1.70 0 q0.85 -2.00 1.70 0 q0.85 2.00 1.70 0 q0.85 -2.00 1.70 0 q0.85 2.00 1.70 0 q0.85 -2.00 1.70 0 q0.85 2.00 1.70 0 q0.85 -2.00 1.70 0 q0.85 2.00 1.70 0 q0.85 -2.00 1.70 0 q0.85 2.00 1.70 0 q0.85 -2.00 1.70 0 q0.85 2.00 1.70 0 q0.85 -2.00 1.70 0 q0.85 2.00 1.70 0 q0.85 -2.00 1.70 0 q0.85 2.00 1.70 0 q0.85 -2.00 1.70 0 q0.85 2.00 1.70 0 q0.85 -2.00 1.70 0 q0.85 2.00 1.70 0 q0.85 -2.00 1.70 0 q0.85 2.00 1.70 0 q0.85 -2.00 1.70 0" fill="none" stroke="#cc4c4c" stroke-width="0.75"/>
<path d="M440.0 214.2 q0.85 -2.00 1.70 0 q0.85 2.00 1.70 0 q0.85 -2.00 1.70 0 q0.85 2.00 1.70 0 q0.85 -2.00 1.70 0 q0.85 2.00 1.70 0 q0.85 -2.00 1.70 0 q0.85 2.00 1.70 0 q0.85 -2.00 1.70 0 q0.85 2.00 1.70 0 q0.85 -2.00 1.70 0 q0.85 2.00 1.70 0 q0.85 -2.00 1.70 0 q0.85 2.00 1.70 0 q0.85 -2.00 1.70 0 q0.85 2.00 1.70 0 q0.85 -2.00 1.70 0 q0.85 2.00 1.70 0 q0.85 -2.00 1.70 0 q0.85 2.00 1.70 0 q0.85 -2.00 1.70 0 q0.85 2.00 1.70 0 q0.85 -2.00 1.70 0 q0.85 2.00 1.70 0 q0.85 -2.00 1.70 0 q0.85 2.00 1.70 0 q0.85 -2.00 1.70 0 q0.85 2.00 1.70 0 q0.85 -2.00 1.70 0 q0.85 2.00 1.70 0 q0.85 -2.00 1.70 0 q0.85 2.00 1.70 0 q0.85 -2.00 1.70 0 q0.85 2.00 1.70 0 q0.85 -2.00 1.70 0 q0.85 2.00 1.70 0" fill="none" stroke="#cc4c4c" stroke-width="0.75"/>
<path d="M340.0 309.4 q0.70 -1.40 1.40 0 q0.70 1.40 1.40 0 q0.70 -1.40 1.40 0 q0.70 1.40 1.40 0 q0.70 -1.40 1.40 0 q0.70 1.40 1.40 0 q0.70 -1.40 1.40 0 q0.70 1.40 1.40 0 q0.70 -1.40 1.40 0 q0.70 1.40 1.40 0 q0.70 -1.40 1.40 0 q0.70 1.40 1.40 0 q0.70 -1.40 1.40 0 q0.70 1.40 1.40 0 q0.70 -1.40 1.40 0 q0.70 1.40 1.40 0 q0.70 -1.40 1.40 0 q0.70 1.40 1.40 0 q0.70 -1.40 1.40 0 q0.70 1.40 1.40 0 q0.70 -1.40 1.40 0 q0.70 1.40 1.40 0 q0.70 -1.40 1.40 0 q0.70 1.40 1.40 0 q0.70 -1.40 1.40 0 q0.70 1.40 1.40 0 q0.70 -1.40 1.40 0 q0.70 1.40 1.40 0 q0.70 -1.40 1.40 0 q0.70 1.40 1.40 0 q0.70 -1.40 1.40 0 q0.70 1.40 1.40 0 q0.70 -1.40 1.40 0 q0.70 1.40 1.40 0 q0.70 -1.40 1.40 0 q0.70 1.40 1.40 0 q0.70 -1.40 1.40 0 q0.70 1.40 1.40 0 q0.70 -1.40 1.40 0" fill="none" stroke="#cc4c4c" stroke-width="0.6"/>
<path d="M494.0 167.0 q0.70 -1.40 1.40 0 q0.70 1.40 1.40 0 q0.70 -1.40 1.40 0 q0.70 1.40 1.40 0 q0.70 -1.40 1.40 0 q0.70 1.40 1.40 0 q0.70 -1.40 1.40 0" fill="none" stroke="#cc4c4c" stroke-width="0.6"/>
<path d="M384.0 209.0 q0.70 -1.40 1.40 0 q0.70 1.40 1.40 0 q0.70 -1.40 1.40 0 q0.70 1.40 1.40 0 q0.70 -1.40 1.40 0 q0.70 1.40 1.40 0 q0.70 -1.40 1.40 0 q0.70 1.40 1.40 0" fill="none" stroke="#cc4c4c" stroke-width="0.6"/>
<path d="M524.0 209.0 q0.70 -1.40 1.40 0 q0.70 1.40 1.40 0 q0.70 -1.40 1.40 0 q0.70 1.40 1.40 0 q0.70 -1.40 1.40 0 q0.70 1.40 1.40 0 q0.70 -1.40 1.40 0 q0.70 1.40 1.40 0 q0.70 -1.40 1.40 0 q0.70 1.40 1.40 0 q0.70 -1.40 1.40 0 q0.70 1.40 1.40 0 q0.70 -1.40 1.40 0" fill="none" stroke="#cc4c4c" stroke-width="0.6"/>
<path d="M390.0 226.2 q0.70 -1.40 1.40 0 q0.70 1.40 1.40 0 q0.70 -1.40 1.40 0 q0.70 1.40 1.40 0 q0.70 -1.40 1.40 0 q0.70 1.40 1.40 0 q0.70 -1.40 1.40 0 q0.70 1.40 1.40 0 q0.70 -1.40 1.40 0 q0.70 1.40 1.40 0 q0.70 -1.40 1.40 0 q0.70 1.40 1.40 0 q0.70 -1.40 1.40 0" fill="none" stroke="#cc4c4c" stroke-width="0.6"/>
<path d="M531.0 274.0 q0.70 -1.40 1.40 0 q0.70 1.40 1.40 0 q0.70 -1.40 1.40 0 q0.70 1.40 1.40 0 q0.70 -1.40 1.40 0 q0.70 1.40 1.40 0 q0.70 -1.40 1.40 0" fill="none" stroke="#cc4c4c" stroke-width="0.6"/>
<path d="M487.0 291.6 q0.70 -1.40 1.40 0 q0.70 1.40 1.40 0 q0.70 -1.40 1.40 0 q0.70 1.40 1.40 0 q0.70 -1.40 1.40 0 q0.70 1.40 1.40 0 q0.70 -1.40 1.40 0 q0.70 1.40 1.40 0" fill="none" stroke="#cc4c4c" stroke-width="0.6"/>
<path d="M436.0 327.0 q0.70 -1.40 1.40 0 q0.70 1.40 1.40 0 q0.70 -1.40 1.40 0 q0.70 1.40 1.40 0 q0.70 -1.40 1.40 0 q0.70 1.40 1.40 0 q0.70 -1.40 1.40 0 q0.70 1.40 1.40 0" fill="none" stroke="#cc4c4c" stroke-width="0.6"/>
<path d="M496.0 333.0 q0.70 -1.40 1.40 0 q0.70 1.40 1.40 0 q0.70 -1.40 1.40 0 q0.70 1.40 1.40 0 q0.70 -1.40 1.40 0 q0.70 1.40 1.40 0" fill="none" stroke="#cc4c4c" stroke-width="0.6"/>
<path d="M372.0 338.6 q0.70 -1.40 1.40 0 q0.70 1.40 1.40 0 q0.70 -1.40 1.40 0 q0.70 1.40 1.40 0 q0.70 -1.40 1.40 0 q0.70 1.40 1.40 0 q0.70 -1.40 1.40 0" fill="none" stroke="#cc4c4c" stroke-width="0.6"/>
<path d="M393.0 338.6 q0.70 -1.40 1.40 0 q0.70 1.40 1.40 0 q0.70 -1.40 1.40 0 q0.70 1.40 1.40 0 q0.70 -1.40 1.40 0 q0.70 1.40 1.40 0 q0.70 -1.40 1.40 0" fill="none" stroke="#cc4c4c" stroke-width="0.6"/>
<path d="M437.0 327.0 q0.70 -1.40 1.40 0 q0.70 1.40 1.40 0 q0.70 -1.40 1.40 0 q0.70 1.40 1.40 0 q0.70 -1.40 1.40 0 q0.70 1.40 1.40 0 q0.70 -1.40 1.40 0" fill="none" stroke="#cc4c4c" stroke-width="0.6"/>
<path d="M470.0 350.6 q0.70 -1.40 1.40 0 q0.70 1.40 1.40 0 q0.70 -1.40 1.40 0 q0.70 1.40 1.40 0 q0.70 -1.40 1.40 0 q0.70 1.40 1.40 0" fill="none" stroke="#cc4c4c" stroke-width="0.6"/>
<path d="M441.0 356.4 q0.70 -1.40 1.40 0 q0.70 1.40 1.40 0 q0.70 -1.40 1.40 0 q0.70 1.40 1.40 0 q0.70 -1.40 1.40 0 q0.70 1.40 1.40 0 q0.70 -1.40 1.40 0" fill="none" stroke="#cc4c4c" stroke-width="0.6"/>
<path d="M472.0 362.4 q0.70 -1.40 1.40 0 q0.70 1.40 1.40 0 q0.70 -1.40 1.40 0 q0.70 1.40 1.40 0 q0.70 -1.40 1.40 0 q0.70 1.40 1.40 0 q0.70 -1.40 1.40 0 q0.70 1.40 1.40 0 q0.70 -1.40 1.40 0 q0.70 1.40 1.40 0 q0.70 -1.40 1.40 0 q0.70 1.40 1.40 0 q0.70 -1.40 1.40 0" fill="none" stroke="#cc4c4c" stroke-width="0.6"/>
<path d="M422.0 404.4 q0.70 -1.40 1.40 0 q0.70 1.40 1.40 0 q0.70 -1.40 1.40 0 q0.70 1.40 1.40 0 q0.70 -1.40 1.40 0 q0.70 1.40 1.40 0 q0.70 -1.40 1.40 0 q0.70 1.40 1.40 0 q0.70 -1.40 1.40 0 q0.70 1.40 1.40 0 q0.70 -1.40 1.40 0 q0.70 1.40 1.40 0" fill="none" stroke="#cc4c4c" stroke-width="0.6"/>
<path d="M68.3 146.00H119.8" stroke="#989898" stroke-width="0.8" stroke-dasharray="2.9 0.8" stroke-dashoffset="2.0" fill="none"/>
<path d="M68.3 147.58H119.8" stroke="#989898" stroke-width="0.8" stroke-dasharray="3.2 0.8" stroke-dashoffset="1.7" fill="none"/>
<path d="M68.3 149.16H119.8" stroke="#989898" stroke-width="0.8" stroke-dasharray="3.5 0.8" stroke-dashoffset="1.3" fill="none"/>
<path d="M68.3 150.74H119.8" stroke="#989898" stroke-width="0.8" stroke-dasharray="3.8 0.8" stroke-dashoffset="1.0" fill="none"/>
<path d="M68.3 152.32H119.8" stroke="#989898" stroke-width="0.8" stroke-dasharray="4.1 0.8" stroke-dashoffset="0.7" fill="none"/>
<path d="M68.3 153.90H119.8" stroke="#989898" stroke-width="0.8" stroke-dasharray="2.7 0.8" stroke-dashoffset="0.3" fill="none"/>
<path d="M68.3 155.48H119.8" stroke="#989898" stroke-width="0.8" stroke-dasharray="3.0 0.8" stroke-dashoffset="0.0" fill="none"/>
<path d="M68.3 157.06H119.8" stroke="#989898" stroke-width="0.8" stroke-dasharray="3.3 0.8" stroke-dashoffset="2.0" fill="none"/>
<path d="M68.3 158.64H119.8" stroke="#989898" stroke-width="0.8" stroke-dasharray="3.6 0.8" stroke-dashoffset="1.7" fill="none"/>
<path d="M68.3 162.60H82" stroke="#686868" stroke-width="0.8" stroke-dasharray="3.9 0.8" stroke-dashoffset="1.3" fill="none"/>
<path d="M68.3 165.70H119.8" stroke="#989898" stroke-width="0.8" stroke-dasharray="4.2 0.8" stroke-dashoffset="1.0" fill="none"/>
<path d="M68.3 167.30H112" stroke="#989898" stroke-width="0.8" stroke-dasharray="2.8 0.8" stroke-dashoffset="0.7" fill="none"/>
<path d="M68.2 207.70H80" stroke="#989898" stroke-width="0.8" stroke-dasharray="3.1 0.8" stroke-dashoffset="0.3" fill="none"/>
<path d="M97 207.70H107" stroke="#989898" stroke-width="0.8" stroke-dasharray="3.4 0.8" stroke-dashoffset="0.0" fill="none"/>
<path d="M68.2 209.70H120" stroke="#989898" stroke-width="0.8" stroke-dasharray="3.7 0.8" stroke-dashoffset="2.0" fill="none"/>
<path d="M68.2 214.20H92" stroke="#989898" stroke-width="0.8" stroke-dasharray="4.0 0.8" stroke-dashoffset="1.7" fill="none"/>
<path d="M68.2 217.80H120" stroke="#989898" stroke-width="0.8" stroke-dasharray="2.6 0.8" stroke-dashoffset="1.3" fill="none"/>
<path d="M68.2 222.00H96" stroke="#989898" stroke-width="0.8" stroke-dasharray="2.9 0.8" stroke-dashoffset="1.0" fill="none"/>
<path d="M68.2 224.60H120" stroke="#989898" stroke-width="0.8" stroke-dasharray="3.2 0.8" stroke-dashoffset="0.7" fill="none"/>
<path d="M68.2 226.15H120" stroke="#989898" stroke-width="0.8" stroke-dasharray="3.5 0.8" stroke-dashoffset="0.3" fill="none"/>
<path d="M68.2 227.70H120" stroke="#989898" stroke-width="0.8" stroke-dasharray="3.8 0.8" stroke-dashoffset="0.0" fill="none"/>
<path d="M68.2 229.25H120" stroke="#989898" stroke-width="0.8" stroke-dasharray="4.1 0.8" stroke-dashoffset="2.0" fill="none"/>
<path d="M68.2 230.80H120" stroke="#989898" stroke-width="0.8" stroke-dasharray="2.7 0.8" stroke-dashoffset="1.7" fill="none"/>
<path d="M72 235.60H105" stroke="#989898" stroke-width="0.8" stroke-dasharray="3.0 0.8" stroke-dashoffset="1.3" fill="none"/>
<path d="M72 237.60H118" stroke="#989898" stroke-width="0.8" stroke-dasharray="3.3 0.8" stroke-dashoffset="1.0" fill="none"/>
<path d="M72 239.20H110" stroke="#989898" stroke-width="0.8" stroke-dasharray="3.6 0.8" stroke-dashoffset="0.7" fill="none"/>
<path d="M72 243.00H118" stroke="#989898" stroke-width="0.8" stroke-dasharray="3.9 0.8" stroke-dashoffset="0.3" fill="none"/>
<path d="M72 244.70H114" stroke="#989898" stroke-width="0.8" stroke-dasharray="4.2 0.8" stroke-dashoffset="0.0" fill="none"/>
<path d="M68.2 248.60H84" stroke="#686868" stroke-width="0.8" stroke-dasharray="2.8 0.8" stroke-dashoffset="2.0" fill="none"/>
<path d="M68.2 250.60H120" stroke="#989898" stroke-width="0.8" stroke-dasharray="3.1 0.8" stroke-dashoffset="1.7" fill="none"/>
<path d="M68.2 252.15H120" stroke="#989898" stroke-width="0.8" stroke-dasharray="3.4 0.8" stroke-dashoffset="1.3" fill="none"/>
<path d="M68.2 253.70H120" stroke="#989898" stroke-width="0.8" stroke-dasharray="3.7 0.8" stroke-dashoffset="1.0" fill="none"/>
<path d="M68.2 255.25H120" stroke="#989898" stroke-width="0.8" stroke-dasharray="4.0 0.8" stroke-dashoffset="0.7" fill="none"/>
<path d="M68.2 257.30H90" stroke="#989898" stroke-width="0.8" stroke-dasharray="2.6 0.8" stroke-dashoffset="0.3" fill="none"/>
<path d="M99 257.30H120" stroke="#989898" stroke-width="0.8" stroke-dasharray="2.9 0.8" stroke-dashoffset="0.0" fill="none"/>
<path d="M68.2 258.80H84" stroke="#989898" stroke-width="0.8" stroke-dasharray="3.2 0.8" stroke-dashoffset="2.0" fill="none"/>
<path d="M68.2 261.40H74" stroke="#686868" stroke-width="0.8" stroke-dasharray="3.5 0.8" stroke-dashoffset="1.7" fill="none"/>
<path d="M68.2 264.50H120" stroke="#989898" stroke-width="0.8" stroke-dasharray="3.8 0.8" stroke-dashoffset="1.3" fill="none"/>
<path d="M68.2 266.20H120" stroke="#989898" stroke-width="0.8" stroke-dasharray="4.1 0.8" stroke-dashoffset="1.0" fill="none"/>
<path d="M68.2 268.60H120" stroke="#989898" stroke-width="0.8" stroke-dasharray="2.7 0.8" stroke-dashoffset="0.7" fill="none"/>
<path d="M68.2 270.15H120" stroke="#989898" stroke-width="0.8" stroke-dasharray="3.0 0.8" stroke-dashoffset="0.3" fill="none"/>
<path d="M68.2 271.70H120" stroke="#989898" stroke-width="0.8" stroke-dasharray="3.3 0.8" stroke-dashoffset="0.0" fill="none"/>
<path d="M68.2 273.25H120" stroke="#989898" stroke-width="0.8" stroke-dasharray="3.6 0.8" stroke-dashoffset="2.0" fill="none"/>
<path d="M68.2 274.80H120" stroke="#989898" stroke-width="0.8" stroke-dasharray="3.9 0.8" stroke-dashoffset="1.7" fill="none"/>
<path d="M68.2 318.00H86" stroke="#686868" stroke-width="0.8" stroke-dasharray="4.2 0.8" stroke-dashoffset="1.3" fill="none"/>
<path d="M68.2 320.40H120" stroke="#989898" stroke-width="0.8" stroke-dasharray="2.8 0.8" stroke-dashoffset="1.0" fill="none"/>
<path d="M68.2 322.00H120" stroke="#989898" stroke-width="0.8" stroke-dasharray="3.1 0.8" stroke-dashoffset="0.7" fill="none"/>
<path d="M68.2 323.60H100" stroke="#989898" stroke-width="0.8" stroke-dasharray="3.4 0.8" stroke-dashoffset="0.3" fill="none"/>
<path d="M68.2 326.70H84" stroke="#686868" stroke-width="0.8" stroke-dasharray="3.7 0.8" stroke-dashoffset="0.0" fill="none"/>
<path d="M68.2 330.40H120" stroke="#989898" stroke-width="0.8" stroke-dasharray="4.0 0.8" stroke-dashoffset="2.0" fill="none"/>
<path d="M72 333.40H104" stroke="#989898" stroke-width="0.8" stroke-dasharray="2.6 0.8" stroke-dashoffset="1.7" fill="none"/>
<path d="M72 336.60H92" stroke="#989898" stroke-width="0.8" stroke-dasharray="2.9 0.8" stroke-dashoffset="1.3" fill="none"/>
<path d="M72 339.60H118" stroke="#989898" stroke-width="0.8" stroke-dasharray="3.2 0.8" stroke-dashoffset="1.0" fill="none"/>
<path d="M72 341.20H116" stroke="#989898" stroke-width="0.8" stroke-dasharray="3.5 0.8" stroke-dashoffset="0.7" fill="none"/>
<path d="M68.2 345.60H74" stroke="#686868" stroke-width="0.8" stroke-dasharray="3.8 0.8" stroke-dashoffset="0.3" fill="none"/>
<path d="M68.2 347.80H120" stroke="#989898" stroke-width="0.8" stroke-dasharray="4.1 0.8" stroke-dashoffset="0.0" fill="none"/>
<path d="M68.2 349.40H120" stroke="#989898" stroke-width="0.8" stroke-dasharray="2.7 0.8" stroke-dashoffset="2.0" fill="none"/>
<path d="M68.2 353.70H80" stroke="#686868" stroke-width="0.8" stroke-dasharray="3.0 0.8" stroke-dashoffset="1.7" fill="none"/>
<path d="M68.2 356.70H120" stroke="#989898" stroke-width="0.8" stroke-dasharray="3.3 0.8" stroke-dashoffset="1.3" fill="none"/>
<path d="M68.2 358.40H120" stroke="#989898" stroke-width="0.8" stroke-dasharray="3.6 0.8" stroke-dashoffset="1.0" fill="none"/>
<path d="M68.2 361.70H90" stroke="#686868" stroke-width="0.8" stroke-dasharray="3.9 0.8" stroke-dashoffset="0.7" fill="none"/>
<path d="M68.2 364.20H120" stroke="#989898" stroke-width="0.8" stroke-dasharray="4.2 0.8" stroke-dashoffset="0.3" fill="none"/>
<path d="M68.2 365.75H120" stroke="#989898" stroke-width="0.8" stroke-dasharray="2.8 0.8" stroke-dashoffset="0.0" fill="none"/>
<path d="M68.2 367.30H120" stroke="#989898" stroke-width="0.8" stroke-dasharray="3.1 0.8" stroke-dashoffset="2.0" fill="none"/>
<path d="M68.2 368.85H120" stroke="#989898" stroke-width="0.8" stroke-dasharray="3.4 0.8" stroke-dashoffset="1.7" fill="none"/>
<path d="M68.2 371.20H120" stroke="#989898" stroke-width="0.8" stroke-dasharray="3.7 0.8" stroke-dashoffset="1.3" fill="none"/>
<path d="M68.2 372.75H120" stroke="#989898" stroke-width="0.8" stroke-dasharray="4.0 0.8" stroke-dashoffset="1.0" fill="none"/>
<path d="M68.2 374.30H120" stroke="#989898" stroke-width="0.8" stroke-dasharray="2.6 0.8" stroke-dashoffset="0.7" fill="none"/>
<path d="M68.2 376.60H120" stroke="#989898" stroke-width="0.8" stroke-dasharray="2.9 0.8" stroke-dashoffset="0.3" fill="none"/>
<path d="M68.2 378.20H120" stroke="#989898" stroke-width="0.8" stroke-dasharray="3.2 0.8" stroke-dashoffset="0.0" fill="none"/>
<path d="M68.2 380.30H120" stroke="#989898" stroke-width="0.8" stroke-dasharray="3.5 0.8" stroke-dashoffset="2.0" fill="none"/>
<path d="M68.2 382.00H112" stroke="#989898" stroke-width="0.8" stroke-dasharray="3.8 0.8" stroke-dashoffset="1.7" fill="none"/>
<path d="M68.2 424.50H120" stroke="#989898" stroke-width="0.8" stroke-dasharray="4.1 0.8" stroke-dashoffset="1.3" fill="none"/>
<path d="M68.2 427.20H72" stroke="#989898" stroke-width="0.8" stroke-dasharray="2.7 0.8" stroke-dashoffset="1.0" fill="none"/>
<path d="M68.2 429.80H76" stroke="#686868" stroke-width="0.8" stroke-dasharray="3.0 0.8" stroke-dashoffset="0.7" fill="none"/>
<path d="M68.2 432.70H120" stroke="#989898" stroke-width="0.8" stroke-dasharray="3.3 0.8" stroke-dashoffset="0.3" fill="none"/>
<path d="M68.2 434.25H120" stroke="#989898" stroke-width="0.8" stroke-dasharray="3.6 0.8" stroke-dashoffset="0.0" fill="none"/>
<path d="M68.2 435.80H120" stroke="#989898" stroke-width="0.8" stroke-dasharray="3.9 0.8" stroke-dashoffset="2.0" fill="none"/>
<path d="M68.2 439.50H79" stroke="#686868" stroke-width="0.8" stroke-dasharray="4.2 0.8" stroke-dashoffset="1.7" fill="none"/>
<path d="M68.2 442.30H120" stroke="#989898" stroke-width="0.8" stroke-dasharray="2.8 0.8" stroke-dashoffset="1.3" fill="none"/>
<path d="M68.2 443.85H120" stroke="#989898" stroke-width="0.8" stroke-dasharray="3.1 0.8" stroke-dashoffset="1.0" fill="none"/>
<path d="M68.2 445.40H120" stroke="#989898" stroke-width="0.8" stroke-dasharray="3.4 0.8" stroke-dashoffset="0.7" fill="none"/>
<path d="M68.2 449.10H76" stroke="#686868" stroke-width="0.8" stroke-dasharray="3.7 0.8" stroke-dashoffset="0.3" fill="none"/>
<path d="M68.2 453.00H120" stroke="#989898" stroke-width="0.8" stroke-dasharray="4.0 0.8" stroke-dashoffset="0.0" fill="none"/>
<path d="M68.2 454.40H120" stroke="#989898" stroke-width="0.8" stroke-dasharray="2.6 0.8" stroke-dashoffset="2.0" fill="none"/>
<path d="M68.2 455.80H120" stroke="#989898" stroke-width="0.8" stroke-dasharray="2.9 0.8" stroke-dashoffset="1.7" fill="none"/>
<path d="M68.2 457.20H120" stroke="#989898" stroke-width="0.8" stroke-dasharray="3.2 0.8" stroke-dashoffset="1.3" fill="none"/>
<path d="M68.2 459.50H78" stroke="#686868" stroke-width="0.8" stroke-dasharray="3.5 0.8" stroke-dashoffset="1.0" fill="none"/>
<path d="M68.2 462.60H120" stroke="#989898" stroke-width="0.8" stroke-dasharray="3.8 0.8" stroke-dashoffset="0.7" fill="none"/>
<path d="M72 465.00H88" stroke="#989898" stroke-width="0.8" stroke-dasharray="4.1 0.8" stroke-dashoffset="0.3" fill="none"/>
<path d="M68.2 467.40H80" stroke="#686868" stroke-width="0.8" stroke-dasharray="2.7 0.8" stroke-dashoffset="0.0" fill="none"/>
<path d="M68.2 470.40H120" stroke="#989898" stroke-width="0.8" stroke-dasharray="3.0 0.8" stroke-dashoffset="2.0" fill="none"/>
<path d="M68.2 472.20H74" stroke="#989898" stroke-width="0.8" stroke-dasharray="3.3 0.8" stroke-dashoffset="1.7" fill="none"/>
<path d="M68.2 474.60H116" stroke="#989898" stroke-width="0.8" stroke-dasharray="3.6 0.8" stroke-dashoffset="1.3" fill="none"/>
</svg>
<div style="left:65.2px;top:57.4px;width:126.8px;height:84.2px;background:#2b2b2b;border:1px solid #7a7a7a;border-right-color:#d0d0d0;"></div>
<div style="left:66.2px;top:105.2px;width:124.8px;height:15.8px;background:#3f3f3f;"></div>
<div style="left:66.2px;top:121px;width:124.8px;height:4.2px;background:#303030;"></div>
<span id="t36" class="t" style="left:93px;top:64.08px;font-size:8.9px;color:#f0f0f0;letter-spacing:-0.598px;">Save <u>A</u>s...</span>
<span id="t37" class="t" style="left:93px;top:79.18px;font-size:8.9px;color:#f0f0f0;letter-spacing:-0.296px;">Expor<u>t</u>...</span>
<span id="t38" class="t" style="left:93px;top:95.08px;font-size:8.9px;color:#f0f0f0;letter-spacing:-0.483px;"><u>S</u>ave a Copy...</span>
<span id="t39" class="t" style="left:93px;top:110.08px;font-size:8.9px;color:#f0f0f0;letter-spacing:-0.485px;">Save as Te<u>m</u>plate...</span>
<span id="t40" class="t" style="left:93px;top:129.38px;font-size:8.9px;color:#f0f0f0;letter-spacing:-0.493px;">Save <u>R</u>emote File...</span>
<span id="t41" class="t" style="left:133.5px;top:64.08px;font-size:8.9px;color:#f0f0f0;letter-spacing:-0.197px;">Ctrl+Shift+S</span>
<svg width="960" height="489" viewBox="0 0 960 489">
<g transform="translate(72.4 61.8) scale(1.0)"><path d="M1 0.4 h7.4 l1.6 1.6 v7.4 a0.8 0.8 0 0 1 -0.8 0.8 h-8.2 a0.8 0.8 0 0 1 -0.8 -0.8 v-8.2 a0.8 0.8 0 0 1 0.8 -0.8z" fill="#7d3284" stroke="#c25fca" stroke-width="1"/><rect x="2.8" y="0.9" width="4.4" height="2.6" fill="#e2b4e6"/><rect x="5.4" y="1.3" width="1.1" height="1.8" fill="#7d3284"/><rect x="2.4" y="5.8" width="5.6" height="3.9" fill="#3d1e42"/><rect x="3.2" y="6.9" width="4" height="0.8" fill="#c78acc"/></g>
<path d="M79 72.4 l0.6-2.2 l3.2-3.2 l1.6 1.6 l-3.2 3.2z" fill="#cfd8e6" stroke="#2b2b2b" stroke-width="0.5"/>
<g stroke="#ececec" stroke-width="1.0" fill="none" stroke-linejoin="round" stroke-linecap="round" ><path d="M73.2 77.6 h5.4 l3.2 3.2 v2.4 M73.2 77.6 v11.2 h4.2"/><path d="M78.6 77.6 v3.2 h3.2"/></g>
<g stroke="#2f86c4" stroke-width="1.1" fill="none" stroke-linejoin="round" stroke-linecap="round" ><path d="M77.6 86.6 h5.4 M81.2 84.8 l2 1.8 l-2 1.8"/></g>
<g stroke="#ececec" stroke-width="1.0" fill="none" stroke-linejoin="round" stroke-linecap="round" ><path d="M73.2 92.8 h5.4 l3.2 3.2 v2 M73.2 92.8 v11.2 h3.6"/><path d="M78.6 92.8 v3.2 h3.2"/></g>
<g transform="translate(77.4 98.4) scale(0.62)"><path d="M1 0.4 h7.4 l1.6 1.6 v7.4 a0.8 0.8 0 0 1 -0.8 0.8 h-8.2 a0.8 0.8 0 0 1 -0.8 -0.8 v-8.2 a0.8 0.8 0 0 1 0.8 -0.8z" fill="#7d3284" stroke="#c25fca" stroke-width="1"/><rect x="2.8" y="0.9" width="4.4" height="2.6" fill="#e2b4e6"/><rect x="5.4" y="1.3" width="1.1" height="1.8" fill="#7d3284"/><rect x="2.4" y="5.8" width="5.6" height="3.9" fill="#3d1e42"/><rect x="3.2" y="6.9" width="4" height="0.8" fill="#c78acc"/></g>
<g stroke="#cfcfcf" stroke-width="0.9" fill="none" stroke-linejoin="round" stroke-linecap="round" ><path d="M72.8 108.8 h8.8 l1.6 1.6 v8.8 h-10.4z"/><rect x="75.4" y="108.8" width="4.4" height="3"/><rect x="75" y="114.8" width="5.6" height="4.4"/></g>
<g transform="translate(72.6 126.6) scale(0.92)"><path d="M1 0.4 h7.4 l1.6 1.6 v7.4 a0.8 0.8 0 0 1 -0.8 0.8 h-8.2 a0.8 0.8 0 0 1 -0.8 -0.8 v-8.2 a0.8 0.8 0 0 1 0.8 -0.8z" fill="#7d3284" stroke="#c25fca" stroke-width="1"/><rect x="2.8" y="0.9" width="4.4" height="2.6" fill="#e2b4e6"/><rect x="5.4" y="1.3" width="1.1" height="1.8" fill="#7d3284"/><rect x="2.4" y="5.8" width="5.6" height="3.9" fill="#3d1e42"/><rect x="3.2" y="6.9" width="4" height="0.8" fill="#c78acc"/></g>
<path d="M72 138 h11.4 M77.7 136.4 v1.6" stroke="#a040a8" stroke-width="1"/>
</svg>
</div></body></html>
